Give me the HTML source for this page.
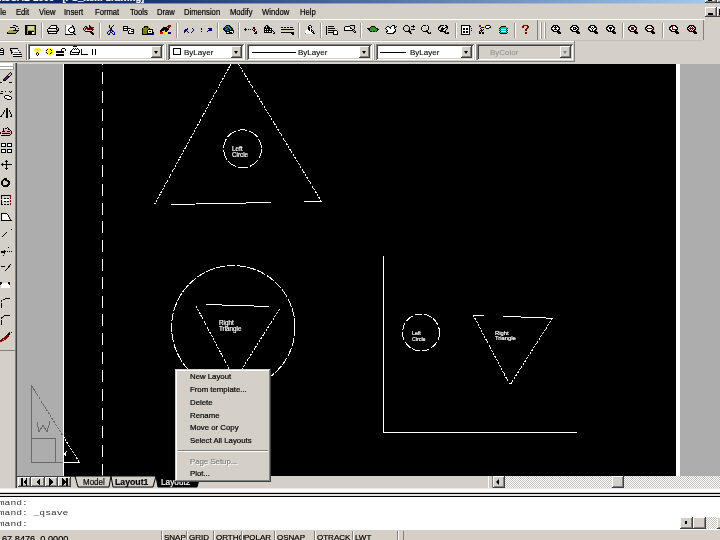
<!DOCTYPE html>
<html><head><meta charset="utf-8">
<style>
*{box-sizing:border-box}
html,body{margin:0;padding:0}
body{width:720px;height:540px;overflow:hidden;position:relative;background:#d4d0c8;font-family:"Liberation Sans",sans-serif;color:#000}
.a{position:absolute}
.t{position:absolute;white-space:nowrap;transform:translateZ(0);-webkit-text-stroke:0.2px currentColor}
.menu span{position:absolute;top:3px;font-size:8.6px;line-height:10px;white-space:nowrap;transform:translateZ(0) scaleX(0.89);transform-origin:0 0;-webkit-text-stroke:0.2px #000}
.raised{background:#d4d0c8;box-shadow:inset -1px -1px 0 #404040, inset 1px 1px 0 #fff, inset -2px -2px 0 #808080}
.sunk{box-shadow:inset 1px 1px 0 #808080, inset -1px -1px 0 #fff, inset 2px 2px 0 #404040, inset -2px -2px 0 #d4d0c8}
.chk{background-color:#fff;background-image:linear-gradient(45deg,#c4c2bc 25%,transparent 25%,transparent 75%,#c4c2bc 75%),linear-gradient(45deg,#c4c2bc 25%,transparent 25%,transparent 75%,#c4c2bc 75%);background-size:2px 2px;background-position:0 0,1px 1px}
svg{position:absolute;left:0;top:0}
</style></head>
<body>

<div class="a" style="left:0;top:0;width:720px;height:4px;background:linear-gradient(90deg,#0a246a 0%,#0a246a 12%,#a6caf0 100%);overflow:hidden"><div class="t" style="left:-11px;top:-7px;color:#fff;font-weight:bold;font-size:9.4px;line-height:10px">AutoCAD 2000 - [PS_Item drawing]</div><div class="a" style="left:0;top:3px;width:720px;height:1px;background:rgba(212,208,200,0.55)"></div><div class="a raised" style="left:705px;top:-10px;width:12px;height:13px"><div class="a" style="left:3px;top:9px;width:4px;height:2px;background:#000"></div></div><div class="a raised" style="left:717px;top:-10px;width:12px;height:13px"></div></div>
<div class="menu a" style="left:0;top:4px;width:720px;height:15px"><span style="left:-6px">File</span><span style="left:16px">Edit</span><span style="left:39px">View</span><span style="left:64px">Insert</span><span style="left:95px">Format</span><span style="left:130px">Tools</span><span style="left:157px">Draw</span><span style="left:184px">Dimension</span><span style="left:230px">Modify</span><span style="left:262px">Window</span><span style="left:300px">Help</span></div>
<div class="a raised" style="left:705px;top:7px;width:12px;height:10px"><div class="a" style="left:3px;top:6px;width:5px;height:2px;background:#000"></div></div>
<div class="a raised" style="left:717px;top:7px;width:12px;height:10px"><div class="a" style="left:2px;top:2px;width:6px;height:6px;border:1px solid #000;border-top-width:2px"></div></div>
<div class="a" style="left:0px;top:19px;width:705px;height:1px;background:#fff"></div>
<div class="a" style="left:0px;top:40px;width:703px;height:1px;background:#c4c0b8"></div>
<div class="a" style="left:0px;top:41px;width:574px;height:1px;background:#fff"></div>
<div class="a" style="left:0px;top:61px;width:575px;height:1px;background:#808080"></div>
<div class="a" style="left:0px;top:62px;width:720px;height:2px;background:#d4d0c8"></div>
<div class="a" style="left:41px;top:23px;width:1px;height:15px;background:#9a968e"></div><div class="a" style="left:42px;top:23px;width:1px;height:15px;background:#fff"></div>
<div class="a" style="left:99px;top:23px;width:1px;height:15px;background:#9a968e"></div><div class="a" style="left:100px;top:23px;width:1px;height:15px;background:#fff"></div>
<div class="a" style="left:176px;top:23px;width:1px;height:15px;background:#9a968e"></div><div class="a" style="left:177px;top:23px;width:1px;height:15px;background:#fff"></div>
<div class="a" style="left:217px;top:23px;width:1px;height:15px;background:#9a968e"></div><div class="a" style="left:218px;top:23px;width:1px;height:15px;background:#fff"></div>
<div class="a" style="left:238px;top:23px;width:1px;height:15px;background:#9a968e"></div><div class="a" style="left:239px;top:23px;width:1px;height:15px;background:#fff"></div>
<div class="a" style="left:298px;top:23px;width:1px;height:15px;background:#9a968e"></div><div class="a" style="left:299px;top:23px;width:1px;height:15px;background:#fff"></div>
<div class="a" style="left:320px;top:23px;width:1px;height:15px;background:#9a968e"></div><div class="a" style="left:321px;top:23px;width:1px;height:15px;background:#fff"></div>
<div class="a" style="left:360px;top:23px;width:1px;height:15px;background:#9a968e"></div><div class="a" style="left:361px;top:23px;width:1px;height:15px;background:#fff"></div>
<div class="a" style="left:455px;top:23px;width:1px;height:15px;background:#9a968e"></div><div class="a" style="left:456px;top:23px;width:1px;height:15px;background:#fff"></div>
<div class="a" style="left:514px;top:23px;width:1px;height:15px;background:#9a968e"></div><div class="a" style="left:515px;top:23px;width:1px;height:15px;background:#fff"></div>
<div class="a" style="left:622px;top:23px;width:1px;height:15px;background:#9a968e"></div><div class="a" style="left:623px;top:23px;width:1px;height:15px;background:#fff"></div>
<div class="a" style="left:662px;top:23px;width:1px;height:15px;background:#9a968e"></div><div class="a" style="left:663px;top:23px;width:1px;height:15px;background:#fff"></div>
<div class="a" style="left:537px;top:20px;width:1px;height:20px;background:#808080"></div>
<div class="a" style="left:540px;top:22px;width:1px;height:17px;background:#fff"></div><div class="a" style="left:541px;top:22px;width:1px;height:17px;background:#9a968e"></div>
<div class="a" style="left:544px;top:22px;width:1px;height:17px;background:#fff"></div><div class="a" style="left:545px;top:22px;width:1px;height:17px;background:#9a968e"></div>
<div class="a" style="left:703px;top:20px;width:1px;height:20px;background:#808080"></div>
<div class="a" style="left:26px;top:44px;width:1px;height:16px;background:#808080"></div><div class="a" style="left:27px;top:44px;width:1px;height:16px;background:#fff"></div>
<div class="a" style="left:165px;top:44px;width:1px;height:16px;background:#fff"></div><div class="a" style="left:166px;top:44px;width:1px;height:16px;background:#9a968e"></div>
<div class="a" style="left:244px;top:44px;width:1px;height:16px;background:#fff"></div><div class="a" style="left:245px;top:44px;width:1px;height:16px;background:#9a968e"></div>
<div class="a" style="left:373px;top:44px;width:1px;height:16px;background:#fff"></div><div class="a" style="left:374px;top:44px;width:1px;height:16px;background:#9a968e"></div>
<div class="a" style="left:475px;top:44px;width:1px;height:16px;background:#fff"></div><div class="a" style="left:476px;top:44px;width:1px;height:16px;background:#9a968e"></div>
<div class="a" style="left:574px;top:41px;width:1px;height:21px;background:#808080"></div>
<div class="a sunk" style="left:28px;top:44px;width:136px;height:16px;background:#fff"></div><div class="a raised" style="left:151px;top:46px;width:11px;height:12px"><div class="a" style="left:3px;top:5px;width:0;height:0;border-left:2.5px solid transparent;border-right:2.5px solid transparent;border-top:3px solid #000"></div></div>
<div class="a sunk" style="left:168px;top:44px;width:76px;height:16px;background:#fff"></div><div class="a raised" style="left:231px;top:46px;width:11px;height:12px"><div class="a" style="left:3px;top:5px;width:0;height:0;border-left:2.5px solid transparent;border-right:2.5px solid transparent;border-top:3px solid #000"></div></div>
<div class="a sunk" style="left:247px;top:44px;width:125px;height:16px;background:#fff"></div><div class="a raised" style="left:359px;top:46px;width:11px;height:12px"><div class="a" style="left:3px;top:5px;width:0;height:0;border-left:2.5px solid transparent;border-right:2.5px solid transparent;border-top:3px solid #000"></div></div>
<div class="a sunk" style="left:376px;top:44px;width:98px;height:16px;background:#fff"></div><div class="a raised" style="left:461px;top:46px;width:11px;height:12px"><div class="a" style="left:3px;top:5px;width:0;height:0;border-left:2.5px solid transparent;border-right:2.5px solid transparent;border-top:3px solid #000"></div></div>
<div class="a sunk" style="left:477px;top:44px;width:96px;height:16px;background:#d4d0c8"></div><div class="a raised" style="left:560px;top:46px;width:11px;height:12px"><div class="a" style="left:3px;top:5px;width:0;height:0;border-left:2.5px solid transparent;border-right:2.5px solid transparent;border-top:3px solid #808080"></div></div>
<div class="t" style="left:184px;top:48px;font-size:8px;line-height:9px;-webkit-text-stroke:0.1px #000">ByLayer</div>
<div class="a" style="left:252px;top:52px;width:44px;height:1px;background:#000"></div>
<div class="t" style="left:298px;top:48px;font-size:8px;line-height:9px;-webkit-text-stroke:0.1px #000">ByLayer</div>
<div class="a" style="left:380px;top:52px;width:26px;height:1px;background:#000"></div>
<div class="t" style="left:410px;top:48px;font-size:8px;line-height:9px;-webkit-text-stroke:0.1px #000">ByLayer</div>
<div class="t" style="left:490px;top:48px;font-size:8px;line-height:9px;color:#8c8c8c;-webkit-text-stroke:0">ByColor</div>
<div class="a" style="left:0px;top:63px;width:15px;height:288px;background:#d4d0c8"></div>
<div class="a" style="left:0px;top:63px;width:13px;height:3px;background:#fff"></div>
<div class="a" style="left:0px;top:66px;width:13px;height:1px;background:#a8a49c"></div>
<div class="a" style="left:0px;top:67px;width:13px;height:2px;background:#fff"></div>
<div class="a" style="left:0px;top:69px;width:13px;height:1px;background:#a8a49c"></div>
<div class="a" style="left:13px;top:64px;width:1px;height:6px;background:#a8a49c"></div>
<div class="a" style="left:0px;top:350px;width:15px;height:1px;background:#808080"></div>
<div class="a" style="left:15px;top:63px;width:1px;height:425px;background:#808080"></div>
<div class="a" style="left:16px;top:63px;width:1px;height:425px;background:#404040"></div>
<div class="a" style="left:17px;top:64px;width:703px;height:412px;background:#adadad"></div>
<div class="a" style="left:63px;top:64px;width:617px;height:412px;background:#fff"></div>
<div class="a" style="left:64px;top:64px;width:612px;height:412px;background:#000"></div>
<svg width="720" height="540" viewBox="0 0 720 540">
<defs><clipPath id="blk"><rect x="64" y="64" width="612" height="412"/></clipPath><clipPath id="gry"><rect x="17" y="64" width="46" height="412"/></clipPath></defs>
<g clip-path="url(#blk)" stroke="#fff" stroke-width="1" fill="none" shape-rendering="crispEdges">
<line x1="102.5" y1="72" x2="102.5" y2="476" stroke-dasharray="12 6.65"/>
<line x1="102.5" y1="64" x2="102.5" y2="65"/>
<line x1="154.5" y1="204.5" x2="234.5" y2="57.5" stroke-dasharray="2.2 1.1"/>
<line x1="321.5" y1="201.5" x2="234.5" y2="57.5" stroke-dasharray="2.2 1.1"/>
<line x1="171" y1="204.5" x2="271" y2="202.5"/>
<line x1="304" y1="201.5" x2="322" y2="201.5"/>
<circle cx="242.5" cy="148.8" r="19" stroke-dasharray="10 2"/>
<circle cx="233.3" cy="327.3" r="61.7" stroke-dasharray="9 1.5"/>
<line x1="196" y1="306" x2="235" y2="380" stroke-dasharray="2.2 1.1"/>
<line x1="279.4" y1="309.3" x2="235" y2="380" stroke-dasharray="2.2 1.1"/>
<line x1="206" y1="304.5" x2="269.5" y2="306.5"/>
<line x1="383.5" y1="256" x2="383.5" y2="432.5"/>
<line x1="383" y1="432.5" x2="577" y2="432.5"/>
<circle cx="421" cy="332.5" r="18.5" stroke-dasharray="8 2"/>
<line x1="473.3" y1="315.3" x2="510" y2="385" stroke-dasharray="2.2 1.1"/>
<line x1="552.5" y1="318.3" x2="510" y2="385" stroke-dasharray="2.2 1.1"/>
<line x1="473" y1="315.5" x2="484" y2="315.5"/>
<line x1="503" y1="316.3" x2="553" y2="318.3"/>
<line x1="31.5" y1="385.5" x2="79.5" y2="462.5" stroke-dasharray="2.5 1"/>
<line x1="55" y1="462.5" x2="80" y2="462.5"/>
<path d="M62.5 451.5 L66.5 456.5 M66.5 451.5 L62.5 456.5"/>
</g>
<g clip-path="url(#gry)" stroke="#6a6a6a" stroke-width="1" fill="none" shape-rendering="crispEdges">
<line x1="31.5" y1="385" x2="31.5" y2="462.5"/>
<line x1="31" y1="462.5" x2="80" y2="462.5"/>
<rect x="31.5" y="438.5" width="24" height="24"/>
<line x1="31.5" y1="385.5" x2="79.5" y2="462.5" stroke-dasharray="2.5 1"/>
<polyline points="37,422 39,432 43,425 47,432 50,421"/>
</g>
<g shape-rendering="crispEdges">
<rect x="13" y="25" width="3" height="1" fill="#000000"/>
<rect x="16" y="26" width="2" height="1" fill="#000000"/>
<rect x="10" y="27" width="5" height="1" fill="#000000"/>
<rect x="15" y="28" width="1" height="1" fill="#000000"/>
<rect x="18" y="28" width="1" height="1" fill="#000000"/>
<rect x="8" y="29" width="2" height="1" fill="#d8d890"/>
<rect x="15" y="29" width="1" height="1" fill="#000000"/>
<rect x="7" y="30" width="1" height="1" fill="#d8d890"/>
<rect x="8" y="30" width="1" height="1" fill="#ffff00"/>
<rect x="9" y="30" width="4" height="1" fill="#a0a040"/>
<rect x="13" y="30" width="6" height="1" fill="#000000"/>
<rect x="8" y="31" width="9" height="1" fill="#a0a040"/>
<rect x="17" y="31" width="1" height="1" fill="#000000"/>
<rect x="7" y="32" width="1" height="1" fill="#000000"/>
<rect x="8" y="32" width="8" height="1" fill="#a0a040"/>
<rect x="16" y="32" width="1" height="1" fill="#000000"/>
<rect x="7" y="33" width="9" height="1" fill="#000000"/>
<rect x="25" y="25" width="11" height="1" fill="#000000"/>
<rect x="25" y="26" width="2" height="1" fill="#000000"/>
<rect x="27" y="26" width="1" height="1" fill="#808080"/>
<rect x="28" y="26" width="6" height="1" fill="#d8d890"/>
<rect x="34" y="26" width="1" height="1" fill="#808080"/>
<rect x="35" y="26" width="1" height="1" fill="#000000"/>
<rect x="25" y="27" width="2" height="1" fill="#000000"/>
<rect x="27" y="27" width="1" height="1" fill="#808080"/>
<rect x="28" y="27" width="6" height="1" fill="#d8d890"/>
<rect x="34" y="27" width="1" height="1" fill="#808080"/>
<rect x="35" y="27" width="1" height="1" fill="#000000"/>
<rect x="25" y="28" width="2" height="1" fill="#000000"/>
<rect x="27" y="28" width="1" height="1" fill="#808080"/>
<rect x="28" y="28" width="6" height="1" fill="#d8d890"/>
<rect x="34" y="28" width="1" height="1" fill="#808080"/>
<rect x="35" y="28" width="1" height="1" fill="#000000"/>
<rect x="25" y="29" width="2" height="1" fill="#000000"/>
<rect x="27" y="29" width="1" height="1" fill="#808080"/>
<rect x="28" y="29" width="6" height="1" fill="#d8d890"/>
<rect x="34" y="29" width="1" height="1" fill="#808080"/>
<rect x="35" y="29" width="1" height="1" fill="#000000"/>
<rect x="25" y="30" width="2" height="1" fill="#000000"/>
<rect x="27" y="30" width="8" height="1" fill="#a0a040"/>
<rect x="35" y="30" width="1" height="1" fill="#000000"/>
<rect x="25" y="31" width="2" height="1" fill="#000000"/>
<rect x="27" y="31" width="1" height="1" fill="#a0a040"/>
<rect x="28" y="31" width="6" height="1" fill="#000000"/>
<rect x="34" y="31" width="1" height="1" fill="#a0a040"/>
<rect x="35" y="31" width="1" height="1" fill="#000000"/>
<rect x="25" y="32" width="2" height="1" fill="#000000"/>
<rect x="27" y="32" width="1" height="1" fill="#a0a040"/>
<rect x="28" y="32" width="4" height="1" fill="#000000"/>
<rect x="32" y="32" width="2" height="1" fill="#ffffff"/>
<rect x="34" y="32" width="1" height="1" fill="#a0a040"/>
<rect x="35" y="32" width="1" height="1" fill="#000000"/>
<rect x="25" y="33" width="2" height="1" fill="#000000"/>
<rect x="27" y="33" width="1" height="1" fill="#a0a040"/>
<rect x="28" y="33" width="4" height="1" fill="#000000"/>
<rect x="32" y="33" width="2" height="1" fill="#ffffff"/>
<rect x="34" y="33" width="1" height="1" fill="#a0a040"/>
<rect x="35" y="33" width="1" height="1" fill="#000000"/>
<rect x="25" y="34" width="11" height="1" fill="#000000"/>
<rect x="51" y="25" width="6" height="1" fill="#000000"/>
<rect x="50" y="26" width="1" height="1" fill="#000000"/>
<rect x="51" y="26" width="5" height="1" fill="#ffffff"/>
<rect x="56" y="26" width="1" height="1" fill="#000000"/>
<rect x="49" y="27" width="1" height="1" fill="#000000"/>
<rect x="50" y="27" width="6" height="1" fill="#ffffff"/>
<rect x="56" y="27" width="2" height="1" fill="#000000"/>
<rect x="48" y="28" width="9" height="1" fill="#000000"/>
<rect x="57" y="28" width="1" height="1" fill="#ffffff"/>
<rect x="58" y="28" width="1" height="1" fill="#000000"/>
<rect x="47" y="29" width="1" height="1" fill="#000000"/>
<rect x="48" y="29" width="8" height="1" fill="#ffffff"/>
<rect x="56" y="29" width="1" height="1" fill="#000000"/>
<rect x="57" y="29" width="1" height="1" fill="#808080"/>
<rect x="58" y="29" width="1" height="1" fill="#000000"/>
<rect x="47" y="30" width="1" height="1" fill="#000000"/>
<rect x="48" y="30" width="9" height="1" fill="#c0c0c0"/>
<rect x="57" y="30" width="2" height="1" fill="#000000"/>
<rect x="47" y="31" width="11" height="1" fill="#000000"/>
<rect x="48" y="32" width="1" height="1" fill="#000000"/>
<rect x="49" y="32" width="7" height="1" fill="#ffffff"/>
<rect x="56" y="32" width="1" height="1" fill="#000000"/>
<rect x="48" y="33" width="9" height="1" fill="#000000"/>
<rect x="65" y="25" width="1" height="1" fill="#808080"/>
<rect x="66" y="25" width="5" height="1" fill="#ffffff"/>
<rect x="72" y="25" width="1" height="1" fill="#000000"/>
<rect x="65" y="26" width="1" height="1" fill="#808080"/>
<rect x="66" y="26" width="5" height="1" fill="#ffffff"/>
<rect x="72" y="26" width="2" height="1" fill="#000000"/>
<rect x="65" y="27" width="1" height="1" fill="#808080"/>
<rect x="66" y="27" width="4" height="1" fill="#ffffff"/>
<rect x="70" y="27" width="2" height="1" fill="#000000"/>
<rect x="73" y="27" width="1" height="1" fill="#000000"/>
<rect x="65" y="28" width="1" height="1" fill="#808080"/>
<rect x="66" y="28" width="3" height="1" fill="#ffffff"/>
<rect x="69" y="28" width="1" height="1" fill="#000000"/>
<rect x="70" y="28" width="3" height="1" fill="#ffffff"/>
<rect x="73" y="28" width="2" height="1" fill="#000000"/>
<rect x="65" y="29" width="1" height="1" fill="#808080"/>
<rect x="66" y="29" width="2" height="1" fill="#ffffff"/>
<rect x="68" y="29" width="1" height="1" fill="#000000"/>
<rect x="69" y="29" width="5" height="1" fill="#ffffff"/>
<rect x="74" y="29" width="1" height="1" fill="#000000"/>
<rect x="65" y="30" width="1" height="1" fill="#808080"/>
<rect x="66" y="30" width="2" height="1" fill="#ffffff"/>
<rect x="68" y="30" width="1" height="1" fill="#000000"/>
<rect x="69" y="30" width="5" height="1" fill="#ffffff"/>
<rect x="74" y="30" width="1" height="1" fill="#000000"/>
<rect x="65" y="31" width="1" height="1" fill="#808080"/>
<rect x="66" y="31" width="3" height="1" fill="#ffffff"/>
<rect x="69" y="31" width="1" height="1" fill="#000000"/>
<rect x="70" y="31" width="3" height="1" fill="#ffffff"/>
<rect x="73" y="31" width="2" height="1" fill="#000000"/>
<rect x="65" y="32" width="1" height="1" fill="#808080"/>
<rect x="66" y="32" width="4" height="1" fill="#ffffff"/>
<rect x="70" y="32" width="4" height="1" fill="#000000"/>
<rect x="65" y="33" width="1" height="1" fill="#808080"/>
<rect x="66" y="33" width="7" height="1" fill="#ffffff"/>
<rect x="73" y="33" width="2" height="1" fill="#000000"/>
<rect x="65" y="34" width="8" height="1" fill="#000000"/>
<rect x="74" y="34" width="2" height="1" fill="#000000"/>
<rect x="89" y="25" width="1" height="1" fill="#000000"/>
<rect x="85" y="26" width="2" height="1" fill="#000000"/>
<rect x="89" y="26" width="2" height="1" fill="#000000"/>
<rect x="84" y="27" width="1" height="1" fill="#000000"/>
<rect x="86" y="27" width="2" height="1" fill="#800000"/>
<rect x="89" y="27" width="1" height="1" fill="#800000"/>
<rect x="90" y="27" width="2" height="1" fill="#000000"/>
<rect x="92" y="27" width="2" height="1" fill="#800000"/>
<rect x="83" y="28" width="1" height="1" fill="#000000"/>
<rect x="85" y="28" width="4" height="1" fill="#800000"/>
<rect x="89" y="28" width="1" height="1" fill="#000000"/>
<rect x="90" y="28" width="1" height="1" fill="#800000"/>
<rect x="91" y="28" width="1" height="1" fill="#000000"/>
<rect x="92" y="28" width="1" height="1" fill="#800000"/>
<rect x="83" y="29" width="1" height="1" fill="#000000"/>
<rect x="85" y="29" width="1" height="1" fill="#800000"/>
<rect x="87" y="29" width="2" height="1" fill="#800000"/>
<rect x="89" y="29" width="1" height="1" fill="#000000"/>
<rect x="90" y="29" width="1" height="1" fill="#800000"/>
<rect x="91" y="29" width="1" height="1" fill="#000000"/>
<rect x="92" y="29" width="2" height="1" fill="#800000"/>
<rect x="84" y="30" width="1" height="1" fill="#000000"/>
<rect x="92" y="30" width="1" height="1" fill="#000000"/>
<rect x="85" y="31" width="7" height="1" fill="#000000"/>
<rect x="90" y="32" width="3" height="1" fill="#000000"/>
<rect x="91" y="33" width="3" height="1" fill="#000000"/>
<rect x="92" y="34" width="2" height="1" fill="#000000"/>
<rect x="109" y="25" width="1" height="1" fill="#000000"/>
<rect x="113" y="25" width="1" height="1" fill="#000000"/>
<rect x="109" y="26" width="1" height="1" fill="#000000"/>
<rect x="112" y="26" width="1" height="1" fill="#000000"/>
<rect x="109" y="27" width="1" height="1" fill="#000000"/>
<rect x="111" y="27" width="1" height="1" fill="#000000"/>
<rect x="110" y="28" width="2" height="1" fill="#000000"/>
<rect x="110" y="29" width="2" height="1" fill="#000080"/>
<rect x="109" y="30" width="4" height="1" fill="#000080"/>
<rect x="108" y="31" width="1" height="1" fill="#000080"/>
<rect x="110" y="31" width="1" height="1" fill="#000080"/>
<rect x="112" y="31" width="2" height="1" fill="#000080"/>
<rect x="107" y="32" width="1" height="1" fill="#000080"/>
<rect x="110" y="32" width="2" height="1" fill="#000080"/>
<rect x="114" y="32" width="1" height="1" fill="#000080"/>
<rect x="107" y="33" width="1" height="1" fill="#000080"/>
<rect x="109" y="33" width="1" height="1" fill="#000080"/>
<rect x="112" y="33" width="1" height="1" fill="#000080"/>
<rect x="114" y="33" width="1" height="1" fill="#000080"/>
<rect x="108" y="34" width="2" height="1" fill="#000080"/>
<rect x="113" y="34" width="2" height="1" fill="#000080"/>
<rect x="123" y="26" width="5" height="1" fill="#000000"/>
<rect x="123" y="27" width="1" height="1" fill="#000000"/>
<rect x="124" y="27" width="3" height="1" fill="#ffffff"/>
<rect x="127" y="27" width="1" height="1" fill="#000000"/>
<rect x="123" y="28" width="8" height="1" fill="#000000"/>
<rect x="123" y="29" width="1" height="1" fill="#000000"/>
<rect x="124" y="29" width="3" height="1" fill="#ffffff"/>
<rect x="127" y="29" width="1" height="1" fill="#000000"/>
<rect x="128" y="29" width="3" height="1" fill="#ffffff"/>
<rect x="131" y="29" width="3" height="1" fill="#000000"/>
<rect x="123" y="30" width="5" height="1" fill="#000000"/>
<rect x="128" y="30" width="1" height="1" fill="#ffffff"/>
<rect x="129" y="30" width="1" height="1" fill="#000000"/>
<rect x="130" y="30" width="3" height="1" fill="#ffffff"/>
<rect x="133" y="30" width="1" height="1" fill="#000000"/>
<rect x="128" y="31" width="1" height="1" fill="#000000"/>
<rect x="129" y="31" width="2" height="1" fill="#ffffff"/>
<rect x="131" y="31" width="3" height="1" fill="#000000"/>
<rect x="128" y="32" width="1" height="1" fill="#000000"/>
<rect x="129" y="32" width="4" height="1" fill="#ffffff"/>
<rect x="133" y="32" width="1" height="1" fill="#000000"/>
<rect x="128" y="33" width="6" height="1" fill="#000000"/>
<rect x="144" y="26" width="4" height="1" fill="#000000"/>
<rect x="143" y="27" width="1" height="1" fill="#808000"/>
<rect x="144" y="27" width="1" height="1" fill="#000000"/>
<rect x="145" y="27" width="2" height="1" fill="#606060"/>
<rect x="147" y="27" width="1" height="1" fill="#000000"/>
<rect x="148" y="27" width="1" height="1" fill="#808000"/>
<rect x="142" y="28" width="1" height="1" fill="#000000"/>
<rect x="143" y="28" width="6" height="1" fill="#808000"/>
<rect x="149" y="28" width="1" height="1" fill="#000000"/>
<rect x="142" y="29" width="1" height="1" fill="#000000"/>
<rect x="143" y="29" width="5" height="1" fill="#808000"/>
<rect x="148" y="29" width="5" height="1" fill="#000000"/>
<rect x="142" y="30" width="1" height="1" fill="#000000"/>
<rect x="143" y="30" width="4" height="1" fill="#808000"/>
<rect x="147" y="30" width="1" height="1" fill="#000000"/>
<rect x="148" y="30" width="4" height="1" fill="#ffffff"/>
<rect x="152" y="30" width="1" height="1" fill="#000000"/>
<rect x="142" y="31" width="1" height="1" fill="#000000"/>
<rect x="143" y="31" width="4" height="1" fill="#808000"/>
<rect x="147" y="31" width="1" height="1" fill="#000000"/>
<rect x="148" y="31" width="1" height="1" fill="#ffffff"/>
<rect x="149" y="31" width="2" height="1" fill="#000000"/>
<rect x="151" y="31" width="1" height="1" fill="#ffffff"/>
<rect x="152" y="31" width="1" height="1" fill="#000000"/>
<rect x="142" y="32" width="1" height="1" fill="#000000"/>
<rect x="143" y="32" width="4" height="1" fill="#808000"/>
<rect x="147" y="32" width="1" height="1" fill="#000000"/>
<rect x="148" y="32" width="4" height="1" fill="#ffffff"/>
<rect x="152" y="32" width="2" height="1" fill="#000000"/>
<rect x="142" y="33" width="1" height="1" fill="#000000"/>
<rect x="143" y="33" width="4" height="1" fill="#808000"/>
<rect x="147" y="33" width="1" height="1" fill="#000000"/>
<rect x="148" y="33" width="6" height="1" fill="#000080"/>
<rect x="142" y="34" width="6" height="1" fill="#000000"/>
<rect x="148" y="34" width="6" height="1" fill="#000080"/>
<rect x="168" y="25" width="3" height="1" fill="#800000"/>
<rect x="167" y="26" width="4" height="1" fill="#800000"/>
<rect x="163" y="27" width="4" height="1" fill="#000000"/>
<rect x="168" y="27" width="2" height="1" fill="#800000"/>
<rect x="162" y="28" width="6" height="1" fill="#000000"/>
<rect x="168" y="28" width="1" height="1" fill="#800000"/>
<rect x="161" y="29" width="8" height="1" fill="#000000"/>
<rect x="160" y="30" width="4" height="1" fill="#000000"/>
<rect x="165" y="30" width="3" height="1" fill="#000000"/>
<rect x="160" y="31" width="2" height="1" fill="#000000"/>
<rect x="165" y="31" width="2" height="1" fill="#000000"/>
<rect x="160" y="32" width="3" height="1" fill="#e00000"/>
<rect x="164" y="32" width="3" height="1" fill="#ffff00"/>
<rect x="168" y="32" width="3" height="1" fill="#000080"/>
<rect x="160" y="33" width="3" height="1" fill="#e00000"/>
<rect x="164" y="33" width="3" height="1" fill="#ffff00"/>
<rect x="168" y="33" width="3" height="1" fill="#000080"/>
<rect x="187" y="28" width="1" height="1" fill="#000000"/>
<rect x="192" y="28" width="1" height="1" fill="#000000"/>
<rect x="185" y="29" width="2" height="1" fill="#000080"/>
<rect x="187" y="29" width="1" height="1" fill="#000000"/>
<rect x="193" y="29" width="1" height="1" fill="#000080"/>
<rect x="184" y="30" width="3" height="1" fill="#000080"/>
<rect x="193" y="30" width="1" height="1" fill="#000080"/>
<rect x="184" y="31" width="2" height="1" fill="#000080"/>
<rect x="187" y="31" width="1" height="1" fill="#000080"/>
<rect x="192" y="31" width="1" height="1" fill="#000080"/>
<rect x="184" y="32" width="1" height="1" fill="#000080"/>
<rect x="188" y="32" width="1" height="1" fill="#000080"/>
<rect x="191" y="32" width="1" height="1" fill="#000080"/>
<rect x="201" y="28" width="1" height="1" fill="#000000"/>
<rect x="208" y="28" width="1" height="1" fill="#000000"/>
<rect x="209" y="28" width="3" height="1" fill="#000080"/>
<rect x="201" y="29" width="1" height="1" fill="#000000"/>
<rect x="209" y="29" width="3" height="1" fill="#000080"/>
<rect x="208" y="30" width="4" height="1" fill="#000080"/>
<rect x="201" y="31" width="1" height="1" fill="#000000"/>
<rect x="207" y="31" width="1" height="1" fill="#000080"/>
<rect x="226" y="25" width="4" height="1" fill="#000000"/>
<rect x="225" y="26" width="1" height="1" fill="#000080"/>
<rect x="226" y="26" width="2" height="1" fill="#20a020"/>
<rect x="228" y="26" width="1" height="1" fill="#40a0a0"/>
<rect x="229" y="26" width="1" height="1" fill="#000080"/>
<rect x="230" y="26" width="1" height="1" fill="#000000"/>
<rect x="224" y="27" width="1" height="1" fill="#000080"/>
<rect x="225" y="27" width="1" height="1" fill="#20a020"/>
<rect x="226" y="27" width="2" height="1" fill="#000080"/>
<rect x="228" y="27" width="2" height="1" fill="#20a020"/>
<rect x="230" y="27" width="1" height="1" fill="#000080"/>
<rect x="231" y="27" width="1" height="1" fill="#000000"/>
<rect x="223" y="28" width="1" height="1" fill="#000000"/>
<rect x="224" y="28" width="2" height="1" fill="#000080"/>
<rect x="226" y="28" width="2" height="1" fill="#20a020"/>
<rect x="228" y="28" width="1" height="1" fill="#000080"/>
<rect x="229" y="28" width="2" height="1" fill="#20a020"/>
<rect x="231" y="28" width="1" height="1" fill="#000080"/>
<rect x="232" y="28" width="1" height="1" fill="#000000"/>
<rect x="223" y="29" width="1" height="1" fill="#000000"/>
<rect x="224" y="29" width="1" height="1" fill="#000080"/>
<rect x="225" y="29" width="2" height="1" fill="#20a020"/>
<rect x="227" y="29" width="3" height="1" fill="#000080"/>
<rect x="230" y="29" width="1" height="1" fill="#20a020"/>
<rect x="231" y="29" width="1" height="1" fill="#000080"/>
<rect x="232" y="29" width="1" height="1" fill="#000000"/>
<rect x="224" y="30" width="1" height="1" fill="#000000"/>
<rect x="225" y="30" width="2" height="1" fill="#000080"/>
<rect x="227" y="30" width="2" height="1" fill="#20a020"/>
<rect x="229" y="30" width="1" height="1" fill="#000080"/>
<rect x="230" y="30" width="4" height="1" fill="#000000"/>
<rect x="225" y="31" width="5" height="1" fill="#000000"/>
<rect x="230" y="31" width="3" height="1" fill="#ffffff"/>
<rect x="233" y="31" width="1" height="1" fill="#000000"/>
<rect x="226" y="32" width="1" height="1" fill="#000000"/>
<rect x="227" y="32" width="2" height="1" fill="#ffffff"/>
<rect x="229" y="32" width="3" height="1" fill="#000000"/>
<rect x="232" y="32" width="1" height="1" fill="#ffffff"/>
<rect x="233" y="32" width="1" height="1" fill="#000000"/>
<rect x="226" y="33" width="7" height="1" fill="#000000"/>
<rect x="253" y="27" width="2" height="1" fill="#000000"/>
<rect x="245" y="28" width="1" height="1" fill="#000000"/>
<rect x="253" y="28" width="1" height="1" fill="#000000"/>
<rect x="254" y="28" width="1" height="1" fill="#800000"/>
<rect x="244" y="29" width="3" height="1" fill="#000000"/>
<rect x="248" y="29" width="1" height="1" fill="#000000"/>
<rect x="250" y="29" width="1" height="1" fill="#000000"/>
<rect x="252" y="29" width="1" height="1" fill="#000000"/>
<rect x="253" y="29" width="1" height="1" fill="#ffffff"/>
<rect x="254" y="29" width="1" height="1" fill="#800000"/>
<rect x="255" y="29" width="1" height="1" fill="#000000"/>
<rect x="245" y="30" width="1" height="1" fill="#000000"/>
<rect x="253" y="30" width="2" height="1" fill="#000000"/>
<rect x="254" y="31" width="1" height="1" fill="#000000"/>
<rect x="256" y="31" width="1" height="1" fill="#000000"/>
<rect x="255" y="32" width="2" height="1" fill="#000000"/>
<rect x="254" y="33" width="3" height="1" fill="#000000"/>
<rect x="266" y="25" width="2" height="1" fill="#000000"/>
<rect x="265" y="26" width="1" height="1" fill="#000000"/>
<rect x="267" y="26" width="2" height="1" fill="#000000"/>
<rect x="264" y="27" width="2" height="1" fill="#000000"/>
<rect x="267" y="27" width="3" height="1" fill="#000000"/>
<rect x="264" y="28" width="8" height="1" fill="#000000"/>
<rect x="264" y="29" width="1" height="1" fill="#000000"/>
<rect x="265" y="29" width="1" height="1" fill="#ffffff"/>
<rect x="266" y="29" width="1" height="1" fill="#000000"/>
<rect x="267" y="29" width="1" height="1" fill="#ffffff"/>
<rect x="268" y="29" width="2" height="1" fill="#000000"/>
<rect x="270" y="29" width="1" height="1" fill="#ffffff"/>
<rect x="271" y="29" width="1" height="1" fill="#000000"/>
<rect x="264" y="30" width="9" height="1" fill="#000000"/>
<rect x="264" y="31" width="1" height="1" fill="#000000"/>
<rect x="265" y="31" width="1" height="1" fill="#ffffff"/>
<rect x="266" y="31" width="1" height="1" fill="#000000"/>
<rect x="267" y="31" width="1" height="1" fill="#ffffff"/>
<rect x="268" y="31" width="1" height="1" fill="#000000"/>
<rect x="269" y="31" width="1" height="1" fill="#ffffff"/>
<rect x="271" y="31" width="1" height="1" fill="#000000"/>
<rect x="273" y="31" width="1" height="1" fill="#000000"/>
<rect x="264" y="32" width="8" height="1" fill="#000000"/>
<rect x="274" y="32" width="1" height="1" fill="#000000"/>
<rect x="273" y="33" width="2" height="1" fill="#000000"/>
<rect x="281" y="27" width="2" height="1" fill="#000000"/>
<rect x="284" y="27" width="2" height="1" fill="#000000"/>
<rect x="287" y="27" width="2" height="1" fill="#000000"/>
<rect x="290" y="27" width="3" height="1" fill="#000000"/>
<rect x="281" y="29" width="13" height="1" fill="#000000"/>
<rect x="281" y="31" width="13" height="1" fill="#d8d890"/>
<rect x="281" y="32" width="13" height="1" fill="#000000"/>
<rect x="291" y="33" width="3" height="1" fill="#000000"/>
<rect x="292" y="34" width="2" height="1" fill="#000000"/>
<rect x="309" y="25" width="2" height="1" fill="#000000"/>
<rect x="308" y="26" width="1" height="1" fill="#000000"/>
<rect x="309" y="26" width="1" height="1" fill="#ffffff"/>
<rect x="310" y="26" width="1" height="1" fill="#f0f0f0"/>
<rect x="311" y="26" width="1" height="1" fill="#000000"/>
<rect x="308" y="27" width="2" height="1" fill="#000000"/>
<rect x="311" y="27" width="1" height="1" fill="#000000"/>
<rect x="308" y="28" width="2" height="1" fill="#000000"/>
<rect x="307" y="29" width="1" height="1" fill="#ffffff"/>
<rect x="308" y="29" width="2" height="1" fill="#000000"/>
<rect x="310" y="29" width="1" height="1" fill="#ffffff"/>
<rect x="311" y="29" width="1" height="1" fill="#000000"/>
<rect x="306" y="30" width="3" height="1" fill="#ffffff"/>
<rect x="309" y="30" width="1" height="1" fill="#000000"/>
<rect x="310" y="30" width="1" height="1" fill="#ffffff"/>
<rect x="311" y="30" width="2" height="1" fill="#000000"/>
<rect x="305" y="31" width="6" height="1" fill="#ffffff"/>
<rect x="311" y="31" width="1" height="1" fill="#000000"/>
<rect x="313" y="31" width="1" height="1" fill="#000000"/>
<rect x="305" y="32" width="7" height="1" fill="#ffffff"/>
<rect x="312" y="32" width="2" height="1" fill="#000000"/>
<rect x="305" y="33" width="1" height="1" fill="#808080"/>
<rect x="306" y="33" width="7" height="1" fill="#ffffff"/>
<rect x="313" y="33" width="2" height="1" fill="#000000"/>
<rect x="326" y="26" width="1" height="1" fill="#000000"/>
<rect x="328" y="26" width="6" height="1" fill="#000000"/>
<rect x="326" y="27" width="1" height="1" fill="#000000"/>
<rect x="326" y="28" width="1" height="1" fill="#000000"/>
<rect x="328" y="28" width="7" height="1" fill="#000000"/>
<rect x="326" y="29" width="1" height="1" fill="#000000"/>
<rect x="326" y="30" width="1" height="1" fill="#000000"/>
<rect x="328" y="30" width="9" height="1" fill="#000000"/>
<rect x="326" y="31" width="1" height="1" fill="#000000"/>
<rect x="333" y="31" width="1" height="1" fill="#000000"/>
<rect x="334" y="31" width="3" height="1" fill="#ffffff"/>
<rect x="337" y="31" width="1" height="1" fill="#000000"/>
<rect x="326" y="32" width="1" height="1" fill="#000000"/>
<rect x="328" y="32" width="6" height="1" fill="#000000"/>
<rect x="334" y="32" width="3" height="1" fill="#ffffff"/>
<rect x="337" y="32" width="1" height="1" fill="#000000"/>
<rect x="326" y="33" width="1" height="1" fill="#000000"/>
<rect x="333" y="33" width="1" height="1" fill="#000000"/>
<rect x="334" y="33" width="3" height="1" fill="#ffffff"/>
<rect x="337" y="33" width="1" height="1" fill="#000000"/>
<rect x="326" y="34" width="1" height="1" fill="#000000"/>
<rect x="333" y="34" width="5" height="1" fill="#000000"/>
<rect x="350" y="25" width="5" height="1" fill="#000000"/>
<rect x="345" y="26" width="5" height="1" fill="#000000"/>
<rect x="354" y="26" width="1" height="1" fill="#000000"/>
<rect x="344" y="27" width="1" height="1" fill="#000000"/>
<rect x="345" y="27" width="5" height="1" fill="#ffffff"/>
<rect x="350" y="27" width="1" height="1" fill="#000000"/>
<rect x="354" y="27" width="1" height="1" fill="#000000"/>
<rect x="344" y="28" width="1" height="1" fill="#000000"/>
<rect x="345" y="28" width="5" height="1" fill="#ffffff"/>
<rect x="350" y="28" width="2" height="1" fill="#000000"/>
<rect x="354" y="28" width="1" height="1" fill="#000000"/>
<rect x="344" y="29" width="1" height="1" fill="#000000"/>
<rect x="345" y="29" width="7" height="1" fill="#ffffff"/>
<rect x="352" y="29" width="2" height="1" fill="#000000"/>
<rect x="344" y="30" width="9" height="1" fill="#000000"/>
<rect x="354" y="30" width="1" height="1" fill="#000000"/>
<rect x="353" y="31" width="1" height="1" fill="#000000"/>
<rect x="355" y="31" width="1" height="1" fill="#000000"/>
<rect x="354" y="32" width="2" height="1" fill="#000000"/>
<rect x="371" y="26" width="4" height="1" fill="#000000"/>
<rect x="370" y="27" width="1" height="1" fill="#000000"/>
<rect x="371" y="27" width="4" height="1" fill="#20a020"/>
<rect x="375" y="27" width="1" height="1" fill="#000000"/>
<rect x="367" y="28" width="3" height="1" fill="#000000"/>
<rect x="370" y="28" width="6" height="1" fill="#20a020"/>
<rect x="376" y="28" width="2" height="1" fill="#000000"/>
<rect x="368" y="29" width="2" height="1" fill="#000000"/>
<rect x="370" y="29" width="7" height="1" fill="#20a020"/>
<rect x="377" y="29" width="2" height="1" fill="#000000"/>
<rect x="369" y="30" width="1" height="1" fill="#000000"/>
<rect x="370" y="30" width="7" height="1" fill="#20a020"/>
<rect x="377" y="30" width="1" height="1" fill="#000000"/>
<rect x="370" y="31" width="2" height="1" fill="#000000"/>
<rect x="372" y="31" width="1" height="1" fill="#20a020"/>
<rect x="373" y="31" width="2" height="1" fill="#000000"/>
<rect x="375" y="31" width="1" height="1" fill="#20a020"/>
<rect x="376" y="31" width="1" height="1" fill="#000000"/>
<rect x="392" y="25" width="3" height="1" fill="#000000"/>
<rect x="387" y="26" width="2" height="1" fill="#000000"/>
<rect x="391" y="26" width="1" height="1" fill="#000000"/>
<rect x="392" y="26" width="2" height="1" fill="#ffffff"/>
<rect x="394" y="26" width="1" height="1" fill="#000000"/>
<rect x="396" y="26" width="1" height="1" fill="#000000"/>
<rect x="386" y="27" width="1" height="1" fill="#000000"/>
<rect x="387" y="27" width="2" height="1" fill="#ffffff"/>
<rect x="389" y="27" width="2" height="1" fill="#000000"/>
<rect x="391" y="27" width="3" height="1" fill="#ffffff"/>
<rect x="394" y="27" width="2" height="1" fill="#000000"/>
<rect x="385" y="28" width="1" height="1" fill="#000000"/>
<rect x="386" y="28" width="4" height="1" fill="#ffffff"/>
<rect x="390" y="28" width="1" height="1" fill="#000000"/>
<rect x="391" y="28" width="3" height="1" fill="#ffffff"/>
<rect x="394" y="28" width="1" height="1" fill="#000000"/>
<rect x="386" y="29" width="1" height="1" fill="#000000"/>
<rect x="387" y="29" width="8" height="1" fill="#ffffff"/>
<rect x="395" y="29" width="1" height="1" fill="#000000"/>
<rect x="387" y="30" width="1" height="1" fill="#000000"/>
<rect x="388" y="30" width="7" height="1" fill="#ffffff"/>
<rect x="395" y="30" width="1" height="1" fill="#000000"/>
<rect x="386" y="31" width="2" height="1" fill="#000000"/>
<rect x="388" y="31" width="6" height="1" fill="#ffffff"/>
<rect x="394" y="31" width="2" height="1" fill="#000000"/>
<rect x="386" y="32" width="1" height="1" fill="#000000"/>
<rect x="387" y="32" width="6" height="1" fill="#ffffff"/>
<rect x="393" y="32" width="2" height="1" fill="#000000"/>
<rect x="387" y="33" width="7" height="1" fill="#000000"/>
<rect x="405" y="25" width="3" height="1" fill="#000000"/>
<rect x="413" y="25" width="1" height="1" fill="#000000"/>
<rect x="404" y="26" width="1" height="1" fill="#000000"/>
<rect x="408" y="26" width="1" height="1" fill="#000000"/>
<rect x="411" y="26" width="4" height="1" fill="#000000"/>
<rect x="403" y="27" width="1" height="1" fill="#000000"/>
<rect x="409" y="27" width="1" height="1" fill="#000000"/>
<rect x="413" y="27" width="1" height="1" fill="#000000"/>
<rect x="403" y="28" width="1" height="1" fill="#000000"/>
<rect x="409" y="28" width="1" height="1" fill="#000000"/>
<rect x="403" y="29" width="1" height="1" fill="#000000"/>
<rect x="409" y="29" width="1" height="1" fill="#000000"/>
<rect x="411" y="29" width="4" height="1" fill="#000000"/>
<rect x="404" y="30" width="1" height="1" fill="#000000"/>
<rect x="408" y="30" width="2" height="1" fill="#000000"/>
<rect x="405" y="31" width="6" height="1" fill="#000000"/>
<rect x="409" y="32" width="2" height="1" fill="#000000"/>
<rect x="410" y="33" width="2" height="1" fill="#000000"/>
<rect x="423" y="25" width="3" height="1" fill="#000000"/>
<rect x="427" y="25" width="1" height="1" fill="#000000"/>
<rect x="422" y="26" width="1" height="1" fill="#000000"/>
<rect x="423" y="26" width="1" height="1" fill="#ffffff"/>
<rect x="427" y="26" width="1" height="1" fill="#ffffff"/>
<rect x="428" y="26" width="1" height="1" fill="#000000"/>
<rect x="421" y="27" width="1" height="1" fill="#000000"/>
<rect x="422" y="27" width="1" height="1" fill="#ffffff"/>
<rect x="428" y="27" width="1" height="1" fill="#000000"/>
<rect x="421" y="28" width="1" height="1" fill="#000000"/>
<rect x="428" y="28" width="1" height="1" fill="#000000"/>
<rect x="421" y="29" width="1" height="1" fill="#000000"/>
<rect x="422" y="29" width="1" height="1" fill="#ffffff"/>
<rect x="428" y="29" width="1" height="1" fill="#000000"/>
<rect x="422" y="30" width="1" height="1" fill="#000000"/>
<rect x="423" y="30" width="1" height="1" fill="#ffffff"/>
<rect x="426" y="30" width="2" height="1" fill="#000000"/>
<rect x="423" y="31" width="5" height="1" fill="#000000"/>
<rect x="427" y="32" width="2" height="1" fill="#000000"/>
<rect x="430" y="32" width="1" height="1" fill="#000000"/>
<rect x="428" y="33" width="3" height="1" fill="#000000"/>
<rect x="440" y="25" width="4" height="1" fill="#000000"/>
<rect x="445" y="25" width="2" height="1" fill="#000000"/>
<rect x="439" y="26" width="2" height="1" fill="#000000"/>
<rect x="445" y="26" width="1" height="1" fill="#ffffff"/>
<rect x="446" y="26" width="2" height="1" fill="#000000"/>
<rect x="438" y="27" width="2" height="1" fill="#000000"/>
<rect x="442" y="27" width="1" height="1" fill="#000000"/>
<rect x="443" y="27" width="2" height="1" fill="#ffffff"/>
<rect x="445" y="27" width="3" height="1" fill="#000000"/>
<rect x="438" y="28" width="1" height="1" fill="#000000"/>
<rect x="441" y="28" width="4" height="1" fill="#000000"/>
<rect x="447" y="28" width="1" height="1" fill="#000000"/>
<rect x="438" y="29" width="1" height="1" fill="#000000"/>
<rect x="439" y="29" width="1" height="1" fill="#ffffff"/>
<rect x="441" y="29" width="3" height="1" fill="#000000"/>
<rect x="446" y="29" width="1" height="1" fill="#000000"/>
<rect x="439" y="30" width="4" height="1" fill="#000000"/>
<rect x="444" y="30" width="1" height="1" fill="#ffffff"/>
<rect x="445" y="30" width="1" height="1" fill="#000000"/>
<rect x="440" y="31" width="6" height="1" fill="#000000"/>
<rect x="444" y="32" width="2" height="1" fill="#000000"/>
<rect x="447" y="32" width="2" height="1" fill="#000000"/>
<rect x="445" y="33" width="4" height="1" fill="#000000"/>
<rect x="461" y="25" width="9" height="1" fill="#000000"/>
<rect x="461" y="26" width="1" height="1" fill="#000000"/>
<rect x="462" y="26" width="7" height="1" fill="#ffffff"/>
<rect x="469" y="26" width="2" height="1" fill="#000000"/>
<rect x="461" y="27" width="1" height="1" fill="#000000"/>
<rect x="462" y="27" width="7" height="1" fill="#ffffff"/>
<rect x="469" y="27" width="1" height="1" fill="#000000"/>
<rect x="461" y="28" width="1" height="1" fill="#000000"/>
<rect x="462" y="28" width="1" height="1" fill="#ffffff"/>
<rect x="463" y="28" width="2" height="1" fill="#000000"/>
<rect x="465" y="28" width="1" height="1" fill="#ffffff"/>
<rect x="466" y="28" width="2" height="1" fill="#000000"/>
<rect x="468" y="28" width="1" height="1" fill="#ffffff"/>
<rect x="469" y="28" width="1" height="1" fill="#000000"/>
<rect x="471" y="28" width="1" height="1" fill="#000080"/>
<rect x="461" y="29" width="1" height="1" fill="#000000"/>
<rect x="462" y="29" width="1" height="1" fill="#ffffff"/>
<rect x="463" y="29" width="2" height="1" fill="#000000"/>
<rect x="465" y="29" width="1" height="1" fill="#ffffff"/>
<rect x="466" y="29" width="2" height="1" fill="#000000"/>
<rect x="468" y="29" width="1" height="1" fill="#ffffff"/>
<rect x="469" y="29" width="1" height="1" fill="#000000"/>
<rect x="461" y="30" width="1" height="1" fill="#000000"/>
<rect x="462" y="30" width="7" height="1" fill="#ffffff"/>
<rect x="469" y="30" width="1" height="1" fill="#000000"/>
<rect x="471" y="30" width="1" height="1" fill="#000080"/>
<rect x="461" y="31" width="1" height="1" fill="#000000"/>
<rect x="462" y="31" width="1" height="1" fill="#ffffff"/>
<rect x="463" y="31" width="2" height="1" fill="#000000"/>
<rect x="465" y="31" width="1" height="1" fill="#ffffff"/>
<rect x="466" y="31" width="2" height="1" fill="#000000"/>
<rect x="468" y="31" width="1" height="1" fill="#ffffff"/>
<rect x="469" y="31" width="1" height="1" fill="#000000"/>
<rect x="461" y="32" width="1" height="1" fill="#000000"/>
<rect x="462" y="32" width="1" height="1" fill="#ffffff"/>
<rect x="463" y="32" width="2" height="1" fill="#000000"/>
<rect x="465" y="32" width="1" height="1" fill="#ffffff"/>
<rect x="466" y="32" width="2" height="1" fill="#000000"/>
<rect x="468" y="32" width="1" height="1" fill="#ffffff"/>
<rect x="469" y="32" width="1" height="1" fill="#000000"/>
<rect x="461" y="33" width="1" height="1" fill="#000000"/>
<rect x="462" y="33" width="7" height="1" fill="#ffffff"/>
<rect x="469" y="33" width="1" height="1" fill="#000000"/>
<rect x="461" y="34" width="9" height="1" fill="#000000"/>
<rect x="479" y="25" width="2" height="1" fill="#800080"/>
<rect x="481" y="25" width="2" height="1" fill="#ffff00"/>
<rect x="486" y="25" width="4" height="1" fill="#000000"/>
<rect x="479" y="26" width="2" height="1" fill="#800080"/>
<rect x="481" y="26" width="2" height="1" fill="#ffff00"/>
<rect x="485" y="26" width="1" height="1" fill="#000000"/>
<rect x="486" y="26" width="4" height="1" fill="#ffffff"/>
<rect x="490" y="26" width="1" height="1" fill="#000000"/>
<rect x="481" y="27" width="3" height="1" fill="#000000"/>
<rect x="485" y="27" width="1" height="1" fill="#000000"/>
<rect x="486" y="27" width="3" height="1" fill="#ffffff"/>
<rect x="489" y="27" width="2" height="1" fill="#000000"/>
<rect x="480" y="28" width="1" height="1" fill="#000000"/>
<rect x="486" y="28" width="3" height="1" fill="#000000"/>
<rect x="481" y="29" width="1" height="1" fill="#000000"/>
<rect x="483" y="29" width="1" height="1" fill="#000000"/>
<rect x="480" y="30" width="3" height="1" fill="#000000"/>
<rect x="479" y="31" width="1" height="1" fill="#000000"/>
<rect x="481" y="31" width="1" height="1" fill="#000000"/>
<rect x="479" y="32" width="2" height="1" fill="#000000"/>
<rect x="482" y="32" width="2" height="1" fill="#000000"/>
<rect x="479" y="33" width="2" height="1" fill="#000000"/>
<rect x="482" y="33" width="2" height="1" fill="#000000"/>
<rect x="501" y="26" width="5" height="1" fill="#000000"/>
<rect x="500" y="27" width="1" height="1" fill="#000000"/>
<rect x="501" y="27" width="6" height="1" fill="#00c0c0"/>
<rect x="499" y="28" width="1" height="1" fill="#000000"/>
<rect x="500" y="28" width="1" height="1" fill="#00c0c0"/>
<rect x="501" y="28" width="1" height="1" fill="#40a0a0"/>
<rect x="502" y="28" width="4" height="1" fill="#00c0c0"/>
<rect x="506" y="28" width="1" height="1" fill="#40a0a0"/>
<rect x="507" y="28" width="1" height="1" fill="#000000"/>
<rect x="500" y="29" width="1" height="1" fill="#000000"/>
<rect x="501" y="29" width="5" height="1" fill="#ffffff"/>
<rect x="506" y="29" width="1" height="1" fill="#000000"/>
<rect x="499" y="30" width="1" height="1" fill="#000000"/>
<rect x="500" y="30" width="1" height="1" fill="#00c0c0"/>
<rect x="501" y="30" width="1" height="1" fill="#40a0a0"/>
<rect x="502" y="30" width="4" height="1" fill="#00c0c0"/>
<rect x="506" y="30" width="1" height="1" fill="#40a0a0"/>
<rect x="507" y="30" width="1" height="1" fill="#000000"/>
<rect x="500" y="31" width="1" height="1" fill="#000000"/>
<rect x="501" y="31" width="5" height="1" fill="#ffffff"/>
<rect x="506" y="31" width="1" height="1" fill="#000000"/>
<rect x="499" y="32" width="1" height="1" fill="#000000"/>
<rect x="500" y="32" width="1" height="1" fill="#00c0c0"/>
<rect x="501" y="32" width="1" height="1" fill="#40a0a0"/>
<rect x="502" y="32" width="4" height="1" fill="#00c0c0"/>
<rect x="506" y="32" width="1" height="1" fill="#40a0a0"/>
<rect x="507" y="32" width="1" height="1" fill="#000000"/>
<rect x="500" y="33" width="7" height="1" fill="#000000"/>
<rect x="523" y="25" width="5" height="1" fill="#800000"/>
<rect x="522" y="26" width="2" height="1" fill="#800000"/>
<rect x="527" y="26" width="2" height="1" fill="#800000"/>
<rect x="522" y="27" width="2" height="1" fill="#800000"/>
<rect x="527" y="27" width="2" height="1" fill="#800000"/>
<rect x="526" y="28" width="2" height="1" fill="#800000"/>
<rect x="525" y="29" width="2" height="1" fill="#800000"/>
<rect x="525" y="30" width="2" height="1" fill="#800000"/>
<rect x="525" y="32" width="2" height="1" fill="#800000"/>
<rect x="525" y="33" width="2" height="1" fill="#800000"/>
<rect x="553" y="25" width="5" height="1" fill="#000000"/>
<rect x="552" y="26" width="2" height="1" fill="#000000"/>
<rect x="554" y="26" width="1" height="1" fill="#ffffff"/>
<rect x="555" y="26" width="1" height="1" fill="#000000"/>
<rect x="556" y="26" width="1" height="1" fill="#ffffff"/>
<rect x="557" y="26" width="2" height="1" fill="#000000"/>
<rect x="551" y="27" width="2" height="1" fill="#000000"/>
<rect x="553" y="27" width="1" height="1" fill="#ffffff"/>
<rect x="554" y="27" width="3" height="1" fill="#000000"/>
<rect x="557" y="27" width="1" height="1" fill="#ffffff"/>
<rect x="558" y="27" width="2" height="1" fill="#000000"/>
<rect x="551" y="28" width="1" height="1" fill="#000000"/>
<rect x="552" y="28" width="3" height="1" fill="#ffffff"/>
<rect x="555" y="28" width="1" height="1" fill="#000000"/>
<rect x="556" y="28" width="3" height="1" fill="#ffffff"/>
<rect x="559" y="28" width="1" height="1" fill="#000000"/>
<rect x="551" y="29" width="2" height="1" fill="#000000"/>
<rect x="553" y="29" width="1" height="1" fill="#ffffff"/>
<rect x="554" y="29" width="3" height="1" fill="#000000"/>
<rect x="557" y="29" width="1" height="1" fill="#ffffff"/>
<rect x="558" y="29" width="2" height="1" fill="#000000"/>
<rect x="552" y="30" width="2" height="1" fill="#000000"/>
<rect x="554" y="30" width="3" height="1" fill="#ffffff"/>
<rect x="557" y="30" width="2" height="1" fill="#000000"/>
<rect x="553" y="31" width="7" height="1" fill="#000000"/>
<rect x="557" y="32" width="4" height="1" fill="#000000"/>
<rect x="558" y="33" width="3" height="1" fill="#000000"/>
<rect x="572" y="25" width="5" height="1" fill="#000000"/>
<rect x="571" y="26" width="2" height="1" fill="#000000"/>
<rect x="573" y="26" width="3" height="1" fill="#ffffff"/>
<rect x="576" y="26" width="2" height="1" fill="#000000"/>
<rect x="570" y="27" width="2" height="1" fill="#000000"/>
<rect x="572" y="27" width="1" height="1" fill="#ffffff"/>
<rect x="573" y="27" width="3" height="1" fill="#000000"/>
<rect x="576" y="27" width="1" height="1" fill="#ffffff"/>
<rect x="577" y="27" width="2" height="1" fill="#000000"/>
<rect x="570" y="28" width="1" height="1" fill="#000000"/>
<rect x="571" y="28" width="2" height="1" fill="#ffffff"/>
<rect x="573" y="28" width="1" height="1" fill="#000000"/>
<rect x="574" y="28" width="1" height="1" fill="#ffffff"/>
<rect x="575" y="28" width="2" height="1" fill="#000000"/>
<rect x="577" y="28" width="1" height="1" fill="#ffffff"/>
<rect x="578" y="28" width="1" height="1" fill="#000000"/>
<rect x="570" y="29" width="2" height="1" fill="#000000"/>
<rect x="572" y="29" width="1" height="1" fill="#ffffff"/>
<rect x="573" y="29" width="3" height="1" fill="#000000"/>
<rect x="576" y="29" width="1" height="1" fill="#ffffff"/>
<rect x="577" y="29" width="2" height="1" fill="#000000"/>
<rect x="571" y="30" width="2" height="1" fill="#000000"/>
<rect x="573" y="30" width="3" height="1" fill="#ffffff"/>
<rect x="576" y="30" width="2" height="1" fill="#000000"/>
<rect x="572" y="31" width="7" height="1" fill="#000000"/>
<rect x="576" y="32" width="4" height="1" fill="#000000"/>
<rect x="577" y="33" width="3" height="1" fill="#000000"/>
<rect x="590" y="25" width="5" height="1" fill="#000000"/>
<rect x="589" y="26" width="2" height="1" fill="#000000"/>
<rect x="591" y="26" width="3" height="1" fill="#ffffff"/>
<rect x="594" y="26" width="2" height="1" fill="#000000"/>
<rect x="588" y="27" width="3" height="1" fill="#000000"/>
<rect x="591" y="27" width="1" height="1" fill="#ffffff"/>
<rect x="592" y="27" width="1" height="1" fill="#000000"/>
<rect x="593" y="27" width="1" height="1" fill="#ffffff"/>
<rect x="594" y="27" width="3" height="1" fill="#000000"/>
<rect x="588" y="28" width="1" height="1" fill="#000000"/>
<rect x="589" y="28" width="2" height="1" fill="#ffffff"/>
<rect x="591" y="28" width="1" height="1" fill="#000000"/>
<rect x="592" y="28" width="1" height="1" fill="#ffffff"/>
<rect x="593" y="28" width="1" height="1" fill="#000000"/>
<rect x="594" y="28" width="2" height="1" fill="#ffffff"/>
<rect x="596" y="28" width="1" height="1" fill="#000000"/>
<rect x="588" y="29" width="2" height="1" fill="#000000"/>
<rect x="590" y="29" width="2" height="1" fill="#ffffff"/>
<rect x="592" y="29" width="1" height="1" fill="#000000"/>
<rect x="593" y="29" width="2" height="1" fill="#ffffff"/>
<rect x="595" y="29" width="2" height="1" fill="#000000"/>
<rect x="589" y="30" width="2" height="1" fill="#000000"/>
<rect x="591" y="30" width="1" height="1" fill="#ffffff"/>
<rect x="592" y="30" width="1" height="1" fill="#000000"/>
<rect x="593" y="30" width="1" height="1" fill="#ffffff"/>
<rect x="594" y="30" width="2" height="1" fill="#000000"/>
<rect x="590" y="31" width="7" height="1" fill="#000000"/>
<rect x="594" y="32" width="4" height="1" fill="#000000"/>
<rect x="595" y="33" width="3" height="1" fill="#000000"/>
<rect x="608" y="25" width="5" height="1" fill="#000000"/>
<rect x="607" y="26" width="2" height="1" fill="#000000"/>
<rect x="609" y="26" width="3" height="1" fill="#ffffff"/>
<rect x="612" y="26" width="2" height="1" fill="#000000"/>
<rect x="606" y="27" width="2" height="1" fill="#000000"/>
<rect x="608" y="27" width="1" height="1" fill="#ffffff"/>
<rect x="609" y="27" width="3" height="1" fill="#000000"/>
<rect x="612" y="27" width="1" height="1" fill="#ffffff"/>
<rect x="613" y="27" width="2" height="1" fill="#000000"/>
<rect x="606" y="28" width="1" height="1" fill="#000000"/>
<rect x="607" y="28" width="2" height="1" fill="#ffffff"/>
<rect x="609" y="28" width="3" height="1" fill="#000000"/>
<rect x="612" y="28" width="2" height="1" fill="#ffffff"/>
<rect x="614" y="28" width="1" height="1" fill="#000000"/>
<rect x="606" y="29" width="2" height="1" fill="#000000"/>
<rect x="608" y="29" width="2" height="1" fill="#ffffff"/>
<rect x="610" y="29" width="1" height="1" fill="#000000"/>
<rect x="611" y="29" width="2" height="1" fill="#ffffff"/>
<rect x="613" y="29" width="2" height="1" fill="#000000"/>
<rect x="607" y="30" width="2" height="1" fill="#000000"/>
<rect x="609" y="30" width="1" height="1" fill="#ffffff"/>
<rect x="610" y="30" width="1" height="1" fill="#000000"/>
<rect x="611" y="30" width="1" height="1" fill="#ffffff"/>
<rect x="612" y="30" width="2" height="1" fill="#000000"/>
<rect x="608" y="31" width="7" height="1" fill="#000000"/>
<rect x="612" y="32" width="4" height="1" fill="#000000"/>
<rect x="613" y="33" width="3" height="1" fill="#000000"/>
<rect x="630" y="25" width="5" height="1" fill="#000000"/>
<rect x="629" y="26" width="2" height="1" fill="#000000"/>
<rect x="631" y="26" width="3" height="1" fill="#ffffff"/>
<rect x="634" y="26" width="2" height="1" fill="#000000"/>
<rect x="628" y="27" width="2" height="1" fill="#000000"/>
<rect x="630" y="27" width="1" height="1" fill="#ffffff"/>
<rect x="631" y="27" width="3" height="1" fill="#800000"/>
<rect x="634" y="27" width="1" height="1" fill="#ffffff"/>
<rect x="635" y="27" width="2" height="1" fill="#000000"/>
<rect x="628" y="28" width="1" height="1" fill="#000000"/>
<rect x="629" y="28" width="2" height="1" fill="#ffffff"/>
<rect x="631" y="28" width="3" height="1" fill="#800000"/>
<rect x="634" y="28" width="2" height="1" fill="#ffffff"/>
<rect x="636" y="28" width="1" height="1" fill="#000000"/>
<rect x="628" y="29" width="2" height="1" fill="#000000"/>
<rect x="630" y="29" width="1" height="1" fill="#ffffff"/>
<rect x="631" y="29" width="3" height="1" fill="#800000"/>
<rect x="634" y="29" width="1" height="1" fill="#ffffff"/>
<rect x="635" y="29" width="2" height="1" fill="#000000"/>
<rect x="629" y="30" width="2" height="1" fill="#000000"/>
<rect x="631" y="30" width="3" height="1" fill="#ffffff"/>
<rect x="634" y="30" width="2" height="1" fill="#000000"/>
<rect x="630" y="31" width="7" height="1" fill="#000000"/>
<rect x="634" y="32" width="4" height="1" fill="#000000"/>
<rect x="635" y="33" width="3" height="1" fill="#000000"/>
<rect x="647" y="25" width="5" height="1" fill="#000000"/>
<rect x="646" y="26" width="2" height="1" fill="#000000"/>
<rect x="648" y="26" width="3" height="1" fill="#ffffff"/>
<rect x="651" y="26" width="2" height="1" fill="#000000"/>
<rect x="645" y="27" width="2" height="1" fill="#000000"/>
<rect x="647" y="27" width="5" height="1" fill="#ffffff"/>
<rect x="652" y="27" width="2" height="1" fill="#000000"/>
<rect x="645" y="28" width="1" height="1" fill="#000000"/>
<rect x="646" y="28" width="1" height="1" fill="#ffffff"/>
<rect x="647" y="28" width="5" height="1" fill="#800000"/>
<rect x="652" y="28" width="1" height="1" fill="#ffffff"/>
<rect x="653" y="28" width="1" height="1" fill="#000000"/>
<rect x="645" y="29" width="2" height="1" fill="#000000"/>
<rect x="647" y="29" width="5" height="1" fill="#ffffff"/>
<rect x="652" y="29" width="2" height="1" fill="#000000"/>
<rect x="646" y="30" width="2" height="1" fill="#000000"/>
<rect x="648" y="30" width="3" height="1" fill="#ffffff"/>
<rect x="651" y="30" width="2" height="1" fill="#000000"/>
<rect x="647" y="31" width="7" height="1" fill="#000000"/>
<rect x="651" y="32" width="4" height="1" fill="#000000"/>
<rect x="652" y="33" width="3" height="1" fill="#000000"/>
<rect x="671" y="25" width="5" height="1" fill="#000000"/>
<rect x="670" y="26" width="2" height="1" fill="#000000"/>
<rect x="672" y="26" width="1" height="1" fill="#800000"/>
<rect x="673" y="26" width="2" height="1" fill="#ffffff"/>
<rect x="675" y="26" width="2" height="1" fill="#000000"/>
<rect x="669" y="27" width="2" height="1" fill="#000000"/>
<rect x="671" y="27" width="1" height="1" fill="#ffffff"/>
<rect x="672" y="27" width="1" height="1" fill="#800000"/>
<rect x="673" y="27" width="3" height="1" fill="#ffffff"/>
<rect x="676" y="27" width="2" height="1" fill="#000000"/>
<rect x="669" y="28" width="1" height="1" fill="#000000"/>
<rect x="670" y="28" width="2" height="1" fill="#ffffff"/>
<rect x="672" y="28" width="1" height="1" fill="#800000"/>
<rect x="673" y="28" width="4" height="1" fill="#ffffff"/>
<rect x="677" y="28" width="1" height="1" fill="#000000"/>
<rect x="669" y="29" width="2" height="1" fill="#000000"/>
<rect x="671" y="29" width="1" height="1" fill="#ffffff"/>
<rect x="672" y="29" width="4" height="1" fill="#800000"/>
<rect x="676" y="29" width="2" height="1" fill="#000000"/>
<rect x="670" y="30" width="2" height="1" fill="#000000"/>
<rect x="672" y="30" width="3" height="1" fill="#ffffff"/>
<rect x="675" y="30" width="2" height="1" fill="#000000"/>
<rect x="671" y="31" width="7" height="1" fill="#000000"/>
<rect x="675" y="32" width="4" height="1" fill="#000000"/>
<rect x="676" y="33" width="3" height="1" fill="#000000"/>
<rect x="689" y="25" width="5" height="1" fill="#000000"/>
<rect x="688" y="26" width="2" height="1" fill="#000000"/>
<rect x="690" y="26" width="1" height="1" fill="#ffffff"/>
<rect x="691" y="26" width="1" height="1" fill="#800000"/>
<rect x="692" y="26" width="1" height="1" fill="#ffffff"/>
<rect x="693" y="26" width="2" height="1" fill="#000000"/>
<rect x="687" y="27" width="2" height="1" fill="#000000"/>
<rect x="689" y="27" width="1" height="1" fill="#ffffff"/>
<rect x="690" y="27" width="1" height="1" fill="#800000"/>
<rect x="691" y="27" width="1" height="1" fill="#ffffff"/>
<rect x="692" y="27" width="1" height="1" fill="#800000"/>
<rect x="693" y="27" width="1" height="1" fill="#ffffff"/>
<rect x="694" y="27" width="2" height="1" fill="#000000"/>
<rect x="687" y="28" width="1" height="1" fill="#000000"/>
<rect x="688" y="28" width="1" height="1" fill="#ffffff"/>
<rect x="689" y="28" width="5" height="1" fill="#800000"/>
<rect x="694" y="28" width="1" height="1" fill="#ffffff"/>
<rect x="695" y="28" width="1" height="1" fill="#000000"/>
<rect x="687" y="29" width="2" height="1" fill="#000000"/>
<rect x="689" y="29" width="1" height="1" fill="#ffffff"/>
<rect x="690" y="29" width="1" height="1" fill="#800000"/>
<rect x="691" y="29" width="1" height="1" fill="#ffffff"/>
<rect x="692" y="29" width="1" height="1" fill="#800000"/>
<rect x="693" y="29" width="1" height="1" fill="#ffffff"/>
<rect x="694" y="29" width="2" height="1" fill="#000000"/>
<rect x="688" y="30" width="2" height="1" fill="#000000"/>
<rect x="690" y="30" width="1" height="1" fill="#ffffff"/>
<rect x="691" y="30" width="1" height="1" fill="#800000"/>
<rect x="692" y="30" width="1" height="1" fill="#ffffff"/>
<rect x="693" y="30" width="2" height="1" fill="#000000"/>
<rect x="689" y="31" width="7" height="1" fill="#000000"/>
<rect x="693" y="32" width="4" height="1" fill="#000000"/>
<rect x="694" y="33" width="3" height="1" fill="#000000"/>
<rect x="1" y="48" width="2" height="1" fill="#000000"/>
<rect x="0" y="49" width="1" height="1" fill="#000000"/>
<rect x="1" y="49" width="2" height="1" fill="#ffffff"/>
<rect x="3" y="49" width="1" height="1" fill="#000000"/>
<rect x="0" y="50" width="4" height="1" fill="#000000"/>
<rect x="0" y="51" width="3" height="1" fill="#ffffff"/>
<rect x="3" y="51" width="1" height="1" fill="#000000"/>
<rect x="0" y="52" width="4" height="1" fill="#000000"/>
<rect x="0" y="53" width="3" height="1" fill="#ffffff"/>
<rect x="3" y="53" width="1" height="1" fill="#000000"/>
<rect x="0" y="54" width="4" height="1" fill="#000000"/>
<rect x="10" y="48" width="8" height="1" fill="#000000"/>
<rect x="10" y="49" width="1" height="1" fill="#000000"/>
<rect x="10" y="50" width="2" height="1" fill="#000000"/>
<rect x="13" y="50" width="5" height="1" fill="#ffffff"/>
<rect x="18" y="50" width="1" height="1" fill="#000000"/>
<rect x="11" y="51" width="1" height="1" fill="#000000"/>
<rect x="13" y="51" width="6" height="1" fill="#ffffff"/>
<rect x="11" y="52" width="2" height="1" fill="#000000"/>
<rect x="14" y="52" width="4" height="1" fill="#808080"/>
<rect x="19" y="52" width="2" height="1" fill="#000000"/>
<rect x="11" y="53" width="1" height="1" fill="#000000"/>
<rect x="13" y="53" width="7" height="1" fill="#ffffff"/>
<rect x="13" y="54" width="9" height="1" fill="#000000"/>
<rect x="13" y="55" width="8" height="1" fill="#ffffff"/>
<rect x="13" y="56" width="9" height="1" fill="#000000"/>
<rect x="35" y="48" width="5" height="1" fill="#ffff00"/>
<rect x="34" y="49" width="2" height="1" fill="#ffff00"/>
<rect x="36" y="49" width="3" height="1" fill="#d8d890"/>
<rect x="39" y="49" width="2" height="1" fill="#ffff00"/>
<rect x="34" y="50" width="2" height="1" fill="#ffff00"/>
<rect x="36" y="50" width="3" height="1" fill="#d8d890"/>
<rect x="39" y="50" width="2" height="1" fill="#ffff00"/>
<rect x="35" y="51" width="5" height="1" fill="#ffff00"/>
<rect x="36" y="52" width="1" height="1" fill="#ffff00"/>
<rect x="37" y="52" width="1" height="1" fill="#000000"/>
<rect x="38" y="52" width="1" height="1" fill="#ffff00"/>
<rect x="36" y="53" width="1" height="1" fill="#000000"/>
<rect x="38" y="53" width="1" height="1" fill="#000000"/>
<rect x="36" y="54" width="1" height="1" fill="#000000"/>
<rect x="38" y="54" width="1" height="1" fill="#000000"/>
<rect x="37" y="55" width="1" height="1" fill="#000000"/>
<rect x="47" y="48" width="4" height="1" fill="#ffff00"/>
<rect x="46" y="49" width="1" height="1" fill="#ffff00"/>
<rect x="47" y="49" width="1" height="1" fill="#000000"/>
<rect x="48" y="49" width="2" height="1" fill="#ffff00"/>
<rect x="50" y="49" width="1" height="1" fill="#000000"/>
<rect x="51" y="49" width="2" height="1" fill="#ffff00"/>
<rect x="45" y="50" width="1" height="1" fill="#ffff00"/>
<rect x="46" y="50" width="1" height="1" fill="#000000"/>
<rect x="47" y="50" width="4" height="1" fill="#ffff00"/>
<rect x="51" y="50" width="1" height="1" fill="#000000"/>
<rect x="52" y="50" width="1" height="1" fill="#ffff00"/>
<rect x="45" y="51" width="8" height="1" fill="#ffff00"/>
<rect x="45" y="52" width="1" height="1" fill="#ffff00"/>
<rect x="46" y="52" width="1" height="1" fill="#000000"/>
<rect x="47" y="52" width="4" height="1" fill="#ffff00"/>
<rect x="51" y="52" width="1" height="1" fill="#000000"/>
<rect x="52" y="52" width="1" height="1" fill="#ffff00"/>
<rect x="46" y="53" width="1" height="1" fill="#ffff00"/>
<rect x="47" y="53" width="1" height="1" fill="#000000"/>
<rect x="48" y="53" width="2" height="1" fill="#ffff00"/>
<rect x="50" y="53" width="1" height="1" fill="#000000"/>
<rect x="51" y="53" width="2" height="1" fill="#ffff00"/>
<rect x="47" y="54" width="4" height="1" fill="#ffff00"/>
<rect x="62" y="48" width="3" height="1" fill="#000000"/>
<rect x="61" y="49" width="1" height="1" fill="#000000"/>
<rect x="65" y="49" width="1" height="1" fill="#000000"/>
<rect x="61" y="50" width="1" height="1" fill="#000000"/>
<rect x="65" y="50" width="1" height="1" fill="#000000"/>
<rect x="56" y="51" width="8" height="1" fill="#000000"/>
<rect x="56" y="52" width="8" height="1" fill="#000000"/>
<rect x="56" y="54" width="8" height="1" fill="#000000"/>
<rect x="56" y="55" width="8" height="1" fill="#000000"/>
<rect x="73" y="46" width="4" height="1" fill="#000000"/>
<rect x="73" y="48" width="1" height="1" fill="#000000"/>
<rect x="75" y="48" width="1" height="1" fill="#000000"/>
<rect x="77" y="48" width="1" height="1" fill="#000000"/>
<rect x="72" y="49" width="1" height="1" fill="#000000"/>
<rect x="73" y="49" width="1" height="1" fill="#ffffff"/>
<rect x="74" y="49" width="1" height="1" fill="#000000"/>
<rect x="75" y="49" width="1" height="1" fill="#ffffff"/>
<rect x="76" y="49" width="1" height="1" fill="#000000"/>
<rect x="77" y="49" width="1" height="1" fill="#ffffff"/>
<rect x="78" y="49" width="1" height="1" fill="#000000"/>
<rect x="71" y="50" width="1" height="1" fill="#000000"/>
<rect x="72" y="50" width="7" height="1" fill="#ffffff"/>
<rect x="79" y="50" width="1" height="1" fill="#000000"/>
<rect x="70" y="51" width="2" height="1" fill="#000000"/>
<rect x="72" y="51" width="7" height="1" fill="#ffffff"/>
<rect x="79" y="51" width="1" height="1" fill="#000000"/>
<rect x="70" y="52" width="1" height="1" fill="#000000"/>
<rect x="71" y="52" width="1" height="1" fill="#ffffff"/>
<rect x="72" y="52" width="8" height="1" fill="#000000"/>
<rect x="70" y="53" width="1" height="1" fill="#000000"/>
<rect x="71" y="53" width="7" height="1" fill="#ffffff"/>
<rect x="78" y="53" width="1" height="1" fill="#000000"/>
<rect x="70" y="54" width="9" height="1" fill="#000000"/>
<rect x="81" y="49" width="1" height="1" fill="#000000"/>
<rect x="81" y="50" width="1" height="1" fill="#000000"/>
<rect x="81" y="51" width="1" height="1" fill="#000000"/>
<rect x="81" y="52" width="1" height="1" fill="#000000"/>
<rect x="81" y="53" width="1" height="1" fill="#000000"/>
<rect x="81" y="54" width="7" height="1" fill="#000000"/>
<rect x="92" y="49" width="1" height="1" fill="#000000"/>
<rect x="95" y="49" width="1" height="1" fill="#000000"/>
<rect x="92" y="50" width="1" height="1" fill="#000000"/>
<rect x="95" y="50" width="1" height="1" fill="#000000"/>
<rect x="92" y="51" width="1" height="1" fill="#000000"/>
<rect x="95" y="51" width="1" height="1" fill="#000000"/>
<rect x="92" y="52" width="1" height="1" fill="#000000"/>
<rect x="95" y="52" width="1" height="1" fill="#000000"/>
<rect x="92" y="53" width="1" height="1" fill="#000000"/>
<rect x="95" y="53" width="1" height="1" fill="#000000"/>
<rect x="92" y="54" width="1" height="1" fill="#000000"/>
<rect x="95" y="54" width="1" height="1" fill="#000000"/>
<rect x="173" y="48" width="8" height="1" fill="#000000"/>
<rect x="173" y="49" width="1" height="1" fill="#000000"/>
<rect x="174" y="49" width="6" height="1" fill="#ffffff"/>
<rect x="180" y="49" width="1" height="1" fill="#000000"/>
<rect x="173" y="50" width="1" height="1" fill="#000000"/>
<rect x="174" y="50" width="6" height="1" fill="#ffffff"/>
<rect x="180" y="50" width="1" height="1" fill="#000000"/>
<rect x="173" y="51" width="1" height="1" fill="#000000"/>
<rect x="174" y="51" width="6" height="1" fill="#ffffff"/>
<rect x="180" y="51" width="1" height="1" fill="#000000"/>
<rect x="173" y="52" width="1" height="1" fill="#000000"/>
<rect x="174" y="52" width="6" height="1" fill="#ffffff"/>
<rect x="180" y="52" width="1" height="1" fill="#000000"/>
<rect x="173" y="53" width="1" height="1" fill="#000000"/>
<rect x="174" y="53" width="6" height="1" fill="#ffffff"/>
<rect x="180" y="53" width="1" height="1" fill="#000000"/>
<rect x="173" y="54" width="8" height="1" fill="#000000"/>
<rect x="10" y="72" width="1" height="1" fill="#000000"/>
<rect x="9" y="73" width="1" height="1" fill="#000000"/>
<rect x="10" y="73" width="1" height="1" fill="#d8d890"/>
<rect x="11" y="73" width="1" height="1" fill="#000000"/>
<rect x="8" y="74" width="1" height="1" fill="#000000"/>
<rect x="9" y="74" width="2" height="1" fill="#d8d890"/>
<rect x="11" y="74" width="1" height="1" fill="#000000"/>
<rect x="7" y="75" width="1" height="1" fill="#000000"/>
<rect x="8" y="75" width="2" height="1" fill="#d8d890"/>
<rect x="10" y="75" width="1" height="1" fill="#000000"/>
<rect x="6" y="76" width="1" height="1" fill="#000000"/>
<rect x="7" y="76" width="1" height="1" fill="#800080"/>
<rect x="8" y="76" width="2" height="1" fill="#000000"/>
<rect x="5" y="77" width="1" height="1" fill="#000000"/>
<rect x="6" y="77" width="2" height="1" fill="#800080"/>
<rect x="8" y="77" width="1" height="1" fill="#000000"/>
<rect x="4" y="78" width="1" height="1" fill="#000000"/>
<rect x="5" y="78" width="2" height="1" fill="#800080"/>
<rect x="7" y="78" width="1" height="1" fill="#000000"/>
<rect x="3" y="79" width="1" height="1" fill="#000000"/>
<rect x="4" y="79" width="2" height="1" fill="#800080"/>
<rect x="6" y="79" width="1" height="1" fill="#000000"/>
<rect x="3" y="80" width="3" height="1" fill="#000000"/>
<rect x="0" y="82" width="2" height="1" fill="#000000"/>
<rect x="9" y="82" width="3" height="1" fill="#000000"/>
<rect x="1" y="91" width="2" height="1" fill="#000000"/>
<rect x="5" y="91" width="1" height="1" fill="#000000"/>
<rect x="9" y="91" width="1" height="1" fill="#000000"/>
<rect x="11" y="91" width="1" height="1" fill="#000000"/>
<rect x="10" y="92" width="1" height="1" fill="#000000"/>
<rect x="0" y="93" width="3" height="1" fill="#000000"/>
<rect x="5" y="95" width="4" height="1" fill="#000000"/>
<rect x="4" y="96" width="1" height="1" fill="#000000"/>
<rect x="5" y="96" width="4" height="1" fill="#ffffff"/>
<rect x="9" y="96" width="2" height="1" fill="#000000"/>
<rect x="4" y="97" width="1" height="1" fill="#000000"/>
<rect x="5" y="97" width="6" height="1" fill="#ffffff"/>
<rect x="11" y="97" width="1" height="1" fill="#000000"/>
<rect x="5" y="98" width="2" height="1" fill="#000000"/>
<rect x="7" y="98" width="4" height="1" fill="#ffffff"/>
<rect x="11" y="98" width="1" height="1" fill="#000000"/>
<rect x="7" y="99" width="4" height="1" fill="#000000"/>
<rect x="6" y="108" width="2" height="1" fill="#000000"/>
<rect x="6" y="109" width="2" height="1" fill="#000000"/>
<rect x="4" y="110" width="1" height="1" fill="#000000"/>
<rect x="6" y="110" width="2" height="1" fill="#000000"/>
<rect x="9" y="110" width="1" height="1" fill="#000000"/>
<rect x="4" y="111" width="1" height="1" fill="#000000"/>
<rect x="6" y="111" width="2" height="1" fill="#000000"/>
<rect x="9" y="111" width="1" height="1" fill="#000000"/>
<rect x="3" y="112" width="1" height="1" fill="#000000"/>
<rect x="6" y="112" width="2" height="1" fill="#000000"/>
<rect x="10" y="112" width="1" height="1" fill="#000000"/>
<rect x="3" y="113" width="1" height="1" fill="#000000"/>
<rect x="6" y="113" width="2" height="1" fill="#000000"/>
<rect x="10" y="113" width="1" height="1" fill="#000000"/>
<rect x="2" y="114" width="1" height="1" fill="#000000"/>
<rect x="6" y="114" width="2" height="1" fill="#000000"/>
<rect x="11" y="114" width="1" height="1" fill="#000000"/>
<rect x="1" y="115" width="1" height="1" fill="#000000"/>
<rect x="6" y="115" width="2" height="1" fill="#000000"/>
<rect x="11" y="115" width="1" height="1" fill="#000000"/>
<rect x="0" y="116" width="2" height="1" fill="#000000"/>
<rect x="6" y="116" width="2" height="1" fill="#000000"/>
<rect x="10" y="116" width="2" height="1" fill="#000000"/>
<rect x="6" y="117" width="2" height="1" fill="#000000"/>
<rect x="7" y="127" width="1" height="1" fill="#000000"/>
<rect x="3" y="128" width="1" height="1" fill="#000000"/>
<rect x="5" y="128" width="2" height="1" fill="#000000"/>
<rect x="8" y="128" width="1" height="1" fill="#000000"/>
<rect x="3" y="129" width="1" height="1" fill="#000000"/>
<rect x="8" y="129" width="2" height="1" fill="#000000"/>
<rect x="3" y="130" width="1" height="1" fill="#000000"/>
<rect x="4" y="130" width="4" height="1" fill="#f0a0a0"/>
<rect x="10" y="130" width="1" height="1" fill="#000000"/>
<rect x="2" y="131" width="3" height="1" fill="#000000"/>
<rect x="5" y="131" width="2" height="1" fill="#f0a0a0"/>
<rect x="7" y="131" width="3" height="1" fill="#000000"/>
<rect x="11" y="131" width="1" height="1" fill="#000000"/>
<rect x="0" y="132" width="1" height="1" fill="#000000"/>
<rect x="1" y="132" width="10" height="1" fill="#f0a0a0"/>
<rect x="11" y="132" width="1" height="1" fill="#000000"/>
<rect x="0" y="133" width="1" height="1" fill="#000000"/>
<rect x="2" y="133" width="8" height="1" fill="#000000"/>
<rect x="11" y="133" width="1" height="1" fill="#000000"/>
<rect x="10" y="134" width="1" height="1" fill="#000000"/>
<rect x="1" y="135" width="9" height="1" fill="#000000"/>
<rect x="1" y="143" width="5" height="1" fill="#000000"/>
<rect x="7" y="143" width="5" height="1" fill="#000000"/>
<rect x="1" y="144" width="1" height="1" fill="#000000"/>
<rect x="2" y="144" width="3" height="1" fill="#ffffff"/>
<rect x="5" y="144" width="1" height="1" fill="#000000"/>
<rect x="7" y="144" width="1" height="1" fill="#000000"/>
<rect x="8" y="144" width="3" height="1" fill="#ffffff"/>
<rect x="11" y="144" width="1" height="1" fill="#000000"/>
<rect x="1" y="145" width="1" height="1" fill="#000000"/>
<rect x="2" y="145" width="3" height="1" fill="#ffffff"/>
<rect x="5" y="145" width="1" height="1" fill="#000000"/>
<rect x="7" y="145" width="1" height="1" fill="#000000"/>
<rect x="8" y="145" width="3" height="1" fill="#ffffff"/>
<rect x="11" y="145" width="1" height="1" fill="#000000"/>
<rect x="1" y="146" width="5" height="1" fill="#000000"/>
<rect x="7" y="146" width="5" height="1" fill="#000000"/>
<rect x="1" y="149" width="5" height="1" fill="#000000"/>
<rect x="7" y="149" width="5" height="1" fill="#000000"/>
<rect x="1" y="150" width="1" height="1" fill="#000000"/>
<rect x="2" y="150" width="3" height="1" fill="#ffffff"/>
<rect x="5" y="150" width="1" height="1" fill="#000000"/>
<rect x="7" y="150" width="1" height="1" fill="#000000"/>
<rect x="8" y="150" width="3" height="1" fill="#ffffff"/>
<rect x="11" y="150" width="1" height="1" fill="#000000"/>
<rect x="1" y="151" width="1" height="1" fill="#000000"/>
<rect x="2" y="151" width="3" height="1" fill="#ffffff"/>
<rect x="5" y="151" width="1" height="1" fill="#000000"/>
<rect x="7" y="151" width="1" height="1" fill="#000000"/>
<rect x="8" y="151" width="3" height="1" fill="#ffffff"/>
<rect x="11" y="151" width="1" height="1" fill="#000000"/>
<rect x="1" y="152" width="5" height="1" fill="#000000"/>
<rect x="7" y="152" width="5" height="1" fill="#000000"/>
<rect x="6" y="160" width="1" height="1" fill="#000000"/>
<rect x="5" y="161" width="3" height="1" fill="#000000"/>
<rect x="6" y="162" width="1" height="1" fill="#000000"/>
<rect x="2" y="163" width="1" height="1" fill="#000000"/>
<rect x="6" y="163" width="1" height="1" fill="#000000"/>
<rect x="1" y="164" width="11" height="1" fill="#000000"/>
<rect x="2" y="165" width="1" height="1" fill="#000000"/>
<rect x="6" y="165" width="1" height="1" fill="#000000"/>
<rect x="6" y="166" width="1" height="1" fill="#000000"/>
<rect x="6" y="167" width="1" height="1" fill="#000000"/>
<rect x="5" y="168" width="3" height="1" fill="#000000"/>
<rect x="6" y="169" width="1" height="1" fill="#000000"/>
<rect x="4" y="178" width="3" height="1" fill="#000000"/>
<rect x="3" y="179" width="4" height="1" fill="#000000"/>
<rect x="2" y="180" width="2" height="1" fill="#000000"/>
<rect x="5" y="180" width="4" height="1" fill="#000000"/>
<rect x="1" y="181" width="2" height="1" fill="#000000"/>
<rect x="7" y="181" width="3" height="1" fill="#000000"/>
<rect x="1" y="182" width="2" height="1" fill="#000000"/>
<rect x="8" y="182" width="2" height="1" fill="#000000"/>
<rect x="1" y="183" width="2" height="1" fill="#000000"/>
<rect x="8" y="183" width="2" height="1" fill="#000000"/>
<rect x="1" y="184" width="2" height="1" fill="#000000"/>
<rect x="7" y="184" width="3" height="1" fill="#000000"/>
<rect x="2" y="185" width="7" height="1" fill="#000000"/>
<rect x="3" y="186" width="5" height="1" fill="#000000"/>
<rect x="1" y="195" width="9" height="1" fill="#000000"/>
<rect x="10" y="195" width="1" height="1" fill="#800000"/>
<rect x="1" y="196" width="1" height="1" fill="#000000"/>
<rect x="10" y="196" width="1" height="1" fill="#800000"/>
<rect x="1" y="197" width="1" height="1" fill="#000000"/>
<rect x="10" y="197" width="1" height="1" fill="#800000"/>
<rect x="1" y="198" width="1" height="1" fill="#000000"/>
<rect x="4" y="198" width="2" height="1" fill="#000000"/>
<rect x="7" y="198" width="2" height="1" fill="#000000"/>
<rect x="10" y="198" width="1" height="1" fill="#800000"/>
<rect x="3" y="199" width="6" height="1" fill="#ffffff"/>
<rect x="1" y="200" width="1" height="1" fill="#000000"/>
<rect x="3" y="200" width="6" height="1" fill="#ffffff"/>
<rect x="10" y="200" width="1" height="1" fill="#800000"/>
<rect x="1" y="201" width="1" height="1" fill="#000000"/>
<rect x="4" y="201" width="2" height="1" fill="#000000"/>
<rect x="7" y="201" width="2" height="1" fill="#000000"/>
<rect x="10" y="201" width="1" height="1" fill="#800000"/>
<rect x="1" y="202" width="1" height="1" fill="#000000"/>
<rect x="1" y="203" width="1" height="1" fill="#000000"/>
<rect x="10" y="203" width="1" height="1" fill="#800000"/>
<rect x="1" y="204" width="2" height="1" fill="#000000"/>
<rect x="4" y="204" width="2" height="1" fill="#000000"/>
<rect x="7" y="204" width="2" height="1" fill="#000000"/>
<rect x="10" y="204" width="1" height="1" fill="#800000"/>
<rect x="1" y="213" width="6" height="1" fill="#000000"/>
<rect x="1" y="214" width="1" height="1" fill="#000000"/>
<rect x="2" y="214" width="5" height="1" fill="#ffffff"/>
<rect x="7" y="214" width="1" height="1" fill="#000000"/>
<rect x="1" y="215" width="1" height="1" fill="#000000"/>
<rect x="2" y="215" width="6" height="1" fill="#ffffff"/>
<rect x="8" y="215" width="1" height="1" fill="#000000"/>
<rect x="1" y="216" width="1" height="1" fill="#000000"/>
<rect x="2" y="216" width="6" height="1" fill="#ffffff"/>
<rect x="8" y="216" width="1" height="1" fill="#000000"/>
<rect x="1" y="217" width="1" height="1" fill="#000000"/>
<rect x="2" y="217" width="7" height="1" fill="#ffffff"/>
<rect x="9" y="217" width="1" height="1" fill="#000000"/>
<rect x="1" y="218" width="1" height="1" fill="#000000"/>
<rect x="2" y="218" width="7" height="1" fill="#ffffff"/>
<rect x="9" y="218" width="1" height="1" fill="#000000"/>
<rect x="1" y="219" width="1" height="1" fill="#000000"/>
<rect x="2" y="219" width="8" height="1" fill="#ffffff"/>
<rect x="10" y="219" width="1" height="1" fill="#000000"/>
<rect x="1" y="220" width="11" height="1" fill="#000000"/>
<rect x="11" y="229" width="1" height="1" fill="#000000"/>
<rect x="6" y="232" width="1" height="1" fill="#000000"/>
<rect x="5" y="233" width="1" height="1" fill="#000000"/>
<rect x="4" y="234" width="1" height="1" fill="#000000"/>
<rect x="3" y="235" width="1" height="1" fill="#000000"/>
<rect x="2" y="236" width="1" height="1" fill="#000000"/>
<rect x="8" y="247" width="1" height="1" fill="#000000"/>
<rect x="4" y="250" width="1" height="1" fill="#000000"/>
<rect x="1" y="251" width="5" height="1" fill="#000000"/>
<rect x="7" y="251" width="1" height="1" fill="#000000"/>
<rect x="9" y="251" width="1" height="1" fill="#000000"/>
<rect x="11" y="251" width="1" height="1" fill="#000000"/>
<rect x="1" y="252" width="4" height="1" fill="#000000"/>
<rect x="4" y="253" width="1" height="1" fill="#000000"/>
<rect x="3" y="255" width="1" height="1" fill="#000000"/>
<rect x="10" y="264" width="1" height="1" fill="#000000"/>
<rect x="9" y="265" width="1" height="1" fill="#000000"/>
<rect x="1" y="266" width="4" height="1" fill="#000000"/>
<rect x="8" y="266" width="2" height="1" fill="#000000"/>
<rect x="8" y="267" width="1" height="1" fill="#000000"/>
<rect x="7" y="268" width="1" height="1" fill="#000000"/>
<rect x="6" y="269" width="1" height="1" fill="#000000"/>
<rect x="5" y="270" width="1" height="1" fill="#000000"/>
<rect x="0" y="282" width="2" height="1" fill="#000000"/>
<rect x="8" y="282" width="2" height="1" fill="#000000"/>
<rect x="0" y="283" width="2" height="1" fill="#000000"/>
<rect x="2" y="283" width="6" height="1" fill="#ffffff"/>
<rect x="8" y="283" width="2" height="1" fill="#000000"/>
<rect x="0" y="284" width="1" height="1" fill="#000000"/>
<rect x="1" y="284" width="8" height="1" fill="#ffffff"/>
<rect x="9" y="284" width="1" height="1" fill="#000000"/>
<rect x="1" y="285" width="9" height="1" fill="#ffffff"/>
<rect x="1" y="286" width="9" height="1" fill="#ffffff"/>
<rect x="1" y="287" width="9" height="1" fill="#ffffff"/>
<rect x="5" y="298" width="5" height="1" fill="#000000"/>
<rect x="3" y="299" width="2" height="1" fill="#000000"/>
<rect x="1" y="300" width="1" height="1" fill="#000000"/>
<rect x="1" y="301" width="1" height="1" fill="#000000"/>
<rect x="1" y="303" width="1" height="1" fill="#000000"/>
<rect x="1" y="304" width="1" height="1" fill="#000000"/>
<rect x="1" y="305" width="1" height="1" fill="#000000"/>
<rect x="1" y="306" width="1" height="1" fill="#000000"/>
<rect x="1" y="307" width="1" height="1" fill="#000000"/>
<rect x="4" y="315" width="6" height="1" fill="#000000"/>
<rect x="3" y="316" width="1" height="1" fill="#000000"/>
<rect x="1" y="317" width="2" height="1" fill="#000000"/>
<rect x="1" y="318" width="1" height="1" fill="#000000"/>
<rect x="1" y="320" width="1" height="1" fill="#000000"/>
<rect x="1" y="321" width="1" height="1" fill="#000000"/>
<rect x="1" y="322" width="1" height="1" fill="#000000"/>
<rect x="1" y="323" width="1" height="1" fill="#000000"/>
<rect x="1" y="324" width="1" height="1" fill="#000000"/>
<rect x="9" y="332" width="1" height="1" fill="#000000"/>
<rect x="11" y="332" width="1" height="1" fill="#000000"/>
<rect x="8" y="333" width="2" height="1" fill="#000000"/>
<rect x="7" y="334" width="1" height="1" fill="#800000"/>
<rect x="8" y="334" width="2" height="1" fill="#000000"/>
<rect x="6" y="335" width="3" height="1" fill="#800000"/>
<rect x="5" y="336" width="4" height="1" fill="#800000"/>
<rect x="4" y="337" width="4" height="1" fill="#800000"/>
<rect x="2" y="338" width="5" height="1" fill="#800000"/>
<rect x="1" y="339" width="2" height="1" fill="#800000"/>
<rect x="3" y="339" width="1" height="1" fill="#f0a0a0"/>
<rect x="4" y="339" width="2" height="1" fill="#800000"/>
<rect x="0" y="340" width="4" height="1" fill="#800000"/>
<rect x="0" y="341" width="2" height="1" fill="#800000"/>
</g>
</svg>
<div class="t" style="left:232px;top:145.6px;color:#fff;font-size:6.3px;line-height:6px">Left<br>Circle</div>
<div class="t" style="left:219px;top:320px;color:#fff;font-size:6.3px;line-height:6px">Right<br>Triangle</div>
<div class="t" style="left:412px;top:331px;color:#fff;font-size:5.3px;line-height:5.6px">Left<br>Circle</div>
<div class="t" style="left:495px;top:330.6px;color:#fff;font-size:5.8px;line-height:5.4px">Right<br>Triangle</div>
<div class="a" style="left:17px;top:476px;width:703px;height:12px;background:#d4d0c8"></div>
<div class="a" style="left:17px;top:476px;width:58px;height:1px;background:#404040"></div>
<div class="a raised" style="left:18px;top:477px;width:13px;height:10px"></div>
<div class="a raised" style="left:31px;top:477px;width:14px;height:10px"></div>
<div class="a raised" style="left:45px;top:477px;width:13px;height:10px"></div>
<div class="a raised" style="left:58px;top:477px;width:13px;height:10px"></div>
<svg width="720" height="540"><g fill="#000" shape-rendering="crispEdges"><rect x="21" y="478" width="2" height="8"/><polygon points="27,478 27,486 23,482"/><rect x="26" y="478" width="1" height="8"/><polygon points="40,478 40,486 36,482"/><polygon points="49,478 49,486 53,482"/><polygon points="62,478 62,486 66,482"/><rect x="62" y="478" width="1" height="8"/><rect x="66" y="478" width="2" height="8"/></g><polygon points="75,476 111,476 109,487 78,487" fill="#d4d0c8" stroke="#000" stroke-width="1"/><polygon points="111,476 156,476 153,487 113,487" fill="#d4d0c8" stroke="#000" stroke-width="1"/><polygon points="156,476 200,476 197,487 158,487" fill="#000" stroke="#000" stroke-width="1"/></svg>
<div class="t" style="left:82.5px;top:476.5px;font-size:9.6px;line-height:10px;transform:translateZ(0) scaleX(0.83);transform-origin:0 0">Model</div>
<div class="t" style="left:115px;top:476.5px;font-size:9.4px;line-height:10px;font-weight:bold;transform:translateZ(0) scaleX(0.93);transform-origin:0 0">Layout1</div>
<div class="t" style="left:161px;top:476.5px;font-size:9.4px;line-height:10px;color:#fff;transform:translateZ(0) scaleX(0.88);transform-origin:0 0">Layout2</div>
<div class="a" style="left:488px;top:476px;width:5px;height:12px;background:#d4d0c8;box-shadow:inset 1px 0 0 #fff, inset -1px 0 0 #808080"></div>
<div class="a chk" style="left:505px;top:476px;width:215px;height:12px"></div>
<div class="a raised" style="left:493px;top:476px;width:12px;height:12px"><div class="a" style="left:3px;top:3px;width:0;height:0;border-top:3px solid transparent;border-bottom:3px solid transparent;border-right:3px solid #000"></div></div>
<div class="a raised" style="left:612px;top:476px;width:12px;height:12px"></div>
<div class="a" style="left:0px;top:488px;width:720px;height:1px;background:#e8e6e2"></div>
<div class="a" style="left:0px;top:489px;width:720px;height:3px;background:#fff"></div>
<div class="a" style="left:0px;top:492px;width:720px;height:1px;background:#d4d0c8"></div>
<div class="a" style="left:0px;top:493px;width:720px;height:1px;background:#000"></div>
<div class="a" style="left:0px;top:494px;width:720px;height:2px;background:#e4e2de"></div>
<div class="a" style="left:0px;top:496px;width:720px;height:1px;background:#000"></div>
<div class="a" style="left:0px;top:497px;width:720px;height:33px;background:#fff"></div>
<div class="t" style="left:-18.6px;top:497.6px;font-family:'Liberation Mono',monospace;font-size:9.67px;line-height:12.8px;color:#333;-webkit-text-stroke:0;transform:translateZ(0) scaleY(0.82);transform-origin:0 0">Command:<br>Command: _qsave<br>Command:</div>
<div class="a raised" style="left:680px;top:517px;width:13px;height:12px"><div class="a" style="left:5px;top:4px;width:2px;height:3px;background:#000"></div></div>
<div class="a raised" style="left:693px;top:517px;width:13px;height:12px"></div>
<div class="a chk" style="left:706px;top:517px;width:11px;height:12px"></div>
<div class="a raised" style="left:717px;top:517px;width:13px;height:12px"></div>
<div class="a" style="left:0px;top:530px;width:720px;height:10px;background:#d4d0c8"></div>
<div class="t" style="left:2px;top:533.6px;font-size:9.2px;line-height:10px">67.8476, 0.0000</div>
<div class="a" style="left:161px;top:531px;width:1px;height:9px;background:#808080"></div><div class="a" style="left:162px;top:531px;width:1px;height:9px;background:#fff"></div>
<div class="t" style="left:164px;top:533px;font-size:8px;line-height:10px">SNAP</div>
<div class="a" style="left:186px;top:531px;width:1px;height:9px;background:#808080"></div><div class="a" style="left:187px;top:531px;width:1px;height:9px;background:#fff"></div>
<div class="t" style="left:189px;top:533px;font-size:8px;line-height:10px">GRID</div>
<div class="a" style="left:213px;top:531px;width:1px;height:9px;background:#808080"></div><div class="a" style="left:214px;top:531px;width:1px;height:9px;background:#fff"></div>
<div class="t" style="left:216px;top:533px;font-size:8px;line-height:10px">ORTHO</div>
<div class="a" style="left:241px;top:531px;width:1px;height:9px;background:#808080"></div><div class="a" style="left:242px;top:531px;width:1px;height:9px;background:#fff"></div>
<div class="t" style="left:244px;top:533px;font-size:8px;line-height:10px">POLAR</div>
<div class="a" style="left:274px;top:531px;width:1px;height:9px;background:#808080"></div><div class="a" style="left:275px;top:531px;width:1px;height:9px;background:#fff"></div>
<div class="t" style="left:277px;top:533px;font-size:8px;line-height:10px">OSNAP</div>
<div class="a" style="left:314px;top:531px;width:1px;height:9px;background:#808080"></div><div class="a" style="left:315px;top:531px;width:1px;height:9px;background:#fff"></div>
<div class="t" style="left:317px;top:533px;font-size:8px;line-height:10px">OTRACK</div>
<div class="a" style="left:352px;top:531px;width:1px;height:9px;background:#808080"></div><div class="a" style="left:353px;top:531px;width:1px;height:9px;background:#fff"></div>
<div class="t" style="left:355px;top:533px;font-size:8px;line-height:10px">LWT</div>
<div class="a" style="left:397px;top:531px;width:1px;height:9px;background:#808080"></div><div class="a" style="left:398px;top:531px;width:1px;height:9px;background:#fff"></div>
<div class="t" style="left:400px;top:533px;font-size:8px;line-height:10px"></div>
<div class="a" style="left:403px;top:531px;width:1px;height:9px;background:#808080"></div>
<div class="a" style="left:175px;top:369px;width:96px;height:113px;background:#d4d0c8;box-shadow:inset -1px -1px 0 #404040, inset 1px 1px 0 #d4d0c8, inset -2px -2px 0 #808080, inset 2px 2px 0 #fff"></div>
<div class="t" style="left:190px;top:373.4px;font-size:7.8px;line-height:8px">New Layout</div>
<div class="t" style="left:190px;top:386.1px;font-size:7.8px;line-height:8px">From template...</div>
<div class="t" style="left:190px;top:398.8px;font-size:7.8px;line-height:8px">Delete</div>
<div class="t" style="left:190px;top:411.5px;font-size:7.8px;line-height:8px">Rename</div>
<div class="t" style="left:190px;top:424.2px;font-size:7.8px;line-height:8px">Move or Copy</div>
<div class="t" style="left:190px;top:436.9px;font-size:7.8px;line-height:8px">Select All Layouts</div>
<div class="a" style="left:178px;top:450px;width:90px;height:1px;background:#808080"></div><div class="a" style="left:178px;top:451px;width:90px;height:1px;background:#fff"></div>
<div class="t" style="left:191px;top:459px;font-size:7.8px;line-height:8px;color:#fff">Page Setup...</div>
<div class="t" style="left:190px;top:458px;font-size:7.8px;line-height:8px;color:#808080">Page Setup...</div>
<div class="t" style="left:190px;top:470px;font-size:7.8px;line-height:8px">Plot...</div>
</body></html>
